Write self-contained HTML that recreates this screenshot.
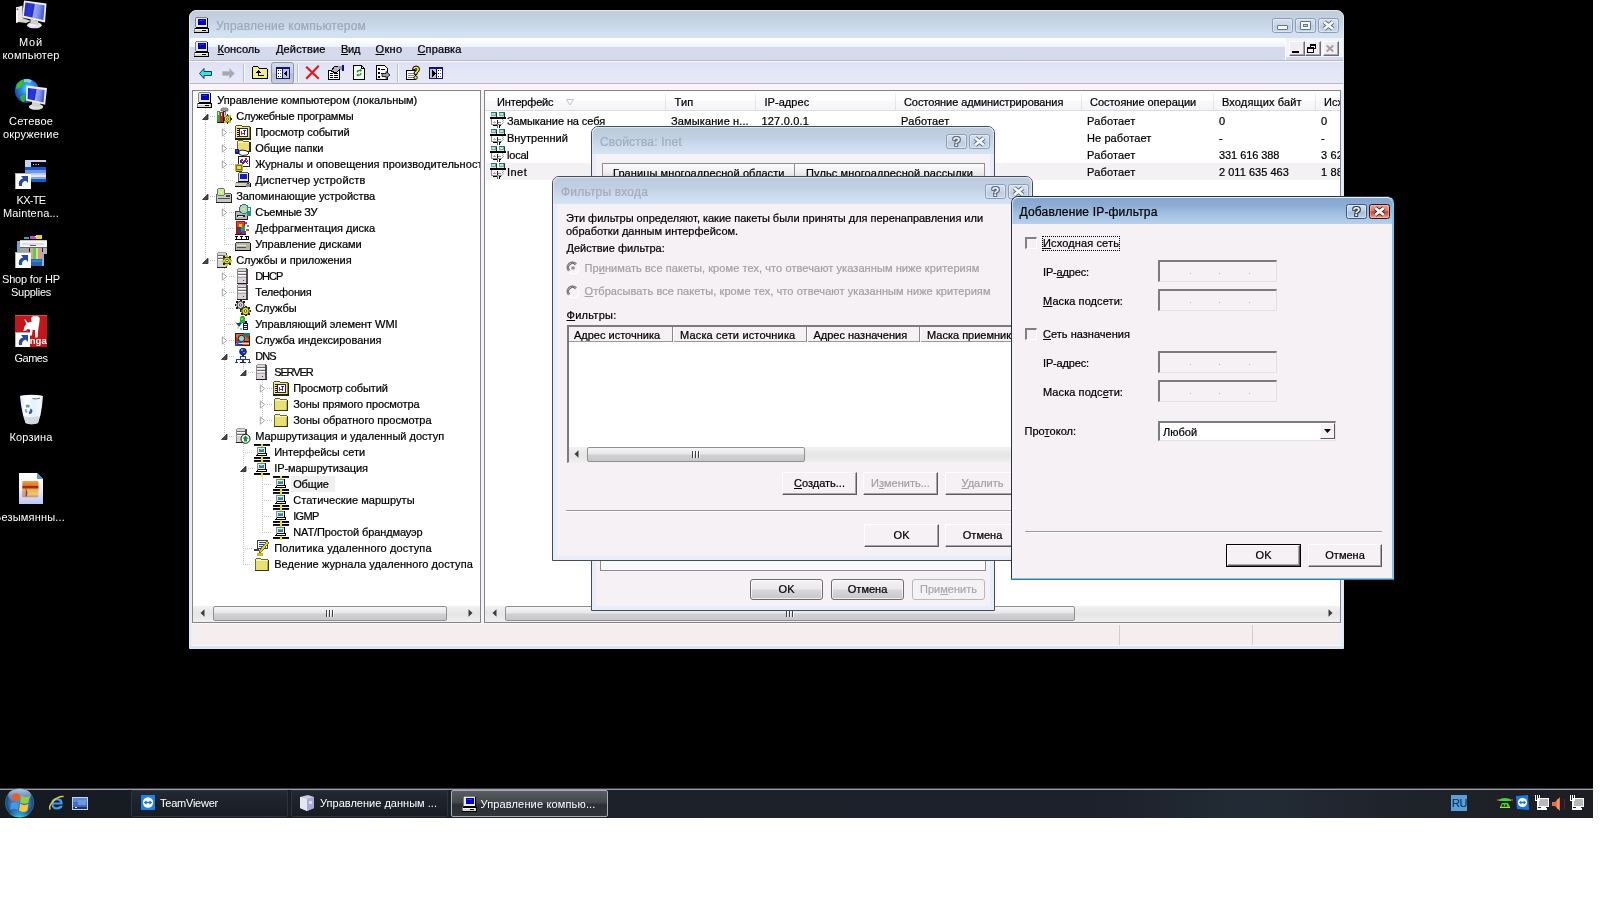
<!DOCTYPE html>
<html><head><meta charset="utf-8"><title>desktop</title><style>
*{margin:0;padding:0;box-sizing:border-box}
html,body{width:1600px;height:900px;overflow:hidden;background:#fff}
body{font-family:"Liberation Sans",sans-serif;font-size:11px;color:#000;position:relative}
div{position:absolute}
svg{position:absolute;overflow:visible}
.t{white-space:nowrap;line-height:14px;height:14px;-webkit-text-stroke:0.22px currentColor}
u{text-decoration:underline;text-underline-offset:1px}
</style></head><body><div id="root" style="left:0;top:0;width:1600px;height:900px;will-change:transform">
<div style="left:0px;top:0px;width:1593px;height:818px;background:#000"></div>
<svg style="left:14px;top:0px" width="34" height="30" viewBox="0 0 34 30"><defs><linearGradient id="scr" x1="0" y1="0" x2="1" y2="1"><stop offset="0" stop-color="#1020a0"/><stop offset="0.45" stop-color="#2838d0"/><stop offset="0.55" stop-color="#7080e8"/><stop offset="1" stop-color="#2030c0"/></linearGradient><radialGradient id="globe" cx="0.4" cy="0.35" r="0.7"><stop offset="0" stop-color="#80c0ff"/><stop offset="0.6" stop-color="#2868d0"/><stop offset="1" stop-color="#103080"/></radialGradient><linearGradient id="bin" x1="0" y1="0" x2="1" y2="0"><stop offset="0" stop-color="#dce8f0"/><stop offset="0.25" stop-color="#ffffff"/><stop offset="0.6" stop-color="#e4f2fc"/><stop offset="0.9" stop-color="#f4f8fc"/><stop offset="1" stop-color="#c8d4e0"/></linearGradient></defs><defs><linearGradient id="scr2" x1="0" y1="0" x2="1" y2="0.15"><stop offset="0" stop-color="#1c1cb0"/><stop offset="0.3" stop-color="#2c38dc"/><stop offset="0.5" stop-color="#2430c8"/><stop offset="0.56" stop-color="#98a8f0"/><stop offset="0.8" stop-color="#7888e8"/><stop offset="1" stop-color="#4858d8"/></linearGradient></defs><path d="M2 7.5 L8.5 5.5 L8.5 21 L2 22.8 Z" fill="#e4e4dc"/><path d="M2 7.5 L4 7 L4 22.2 L2 22.8 Z" fill="#f8f8f4"/><rect x="2.6" y="8.5" width="1.6" height="1.6" fill="#606060"/><path d="M8.5 18 L17 21 L12 23 L4 22 Z" fill="#d4d4cc"/><ellipse cx="20.4" cy="25.2" rx="7.3" ry="3.1" fill="#e4e4e4"/><ellipse cx="19" cy="24.6" rx="3.5" ry="1.5" fill="#f4f4fc"/><path d="M16.5 19 L24 21 L24.5 25 L16.5 24 Z" fill="#d0d0cc"/><path d="M10 0.5 L32.5 3.5 L31 22.5 L8 17.5 Z" fill="#ececfa"/><path d="M11.5 2.6 L30.6 5.2 L29.4 20 L9.9 15.8 Z" fill="url(#scr2)"/></svg>
<div class="t" style="left:19.0px;top:35px;color:#fff;-webkit-text-stroke:0;letter-spacing:0.817px;">Мой</div>
<div class="t" style="left:2.5px;top:48px;color:#fff;-webkit-text-stroke:0;letter-spacing:0.171px;">компьютер</div>
<svg style="left:14px;top:78px" width="34" height="34" viewBox="0 0 34 34"><defs><radialGradient id="globe2" cx="0.55" cy="0.4" r="0.65"><stop offset="0" stop-color="#58e0f0"/><stop offset="0.45" stop-color="#2888e0"/><stop offset="1" stop-color="#1838a0"/></radialGradient></defs><circle cx="12.8" cy="12.8" r="12" fill="url(#globe2)"/><path d="M2.5 7 Q5 2.5 9.5 1.5 Q10.5 5 8 8 Q5 11 2 11 Z" fill="#30c030"/><path d="M8 17 Q11 16 11.5 20 Q11 24 9 24.2 Q6 22 6 19 Z" fill="#30b030"/><path d="M10 1.2 Q14 0.5 18 2.5 L16 5 Q12 3.5 10 4.5 Z" fill="#a0e0f0" opacity="0.8"/><ellipse cx="22" cy="28.8" rx="7.2" ry="3" fill="#e0e0dc"/><path d="M18 23 L26 25 L26.5 29 L18 28 Z" fill="#d0d0cc"/><path d="M12.4 7.6 L33 10 L31.2 26.8 L12 22.4 Z" fill="#ececfa"/><path d="M14 10 L30.6 12 L29.6 24.5 L13.6 21 Z" fill="url(#scr2)"/></svg>
<div class="t" style="left:9.0px;top:114px;color:#fff;-webkit-text-stroke:0;letter-spacing:0.188px;">Сетевое</div>
<div class="t" style="left:3.0px;top:127px;color:#fff;-webkit-text-stroke:0;letter-spacing:0.182px;">окружение</div>
<svg style="left:14px;top:158px" width="32" height="32" viewBox="0 0 32 32" shape-rendering="crispEdges" ><rect x="11" y="2" width="21" height="22" fill="#1450b8"/><rect x="11" y="2" width="21" height="2" fill="#d4ccf0"/><rect x="11" y="4" width="6" height="5" fill="#c4d4f4"/><rect x="17" y="4" width="15" height="5" fill="#080810"/><rect x="19" y="6" width="1" height="1" fill="#d0d8e0"/><rect x="21" y="6" width="2" height="1" fill="#809080"/><rect x="24" y="6" width="1" height="1" fill="#d0d8e0"/><rect x="11" y="9" width="21" height="3" fill="#1858c8"/><rect x="11" y="12" width="21" height="3" fill="#6c98dc"/><rect x="11" y="15" width="21" height="2" fill="#b8c8f0"/><rect x="11" y="17" width="21" height="2" fill="#ece4fa"/><rect x="11" y="19" width="21" height="2" fill="#88a8e4"/><rect x="11" y="21" width="21" height="3" fill="#1060c4"/><g transform="translate(1,15)"><rect x="0" y="0" width="16" height="16" fill="#fff"/><rect x="0" y="0" width="16" height="1" fill="#b0b0b0"/><rect x="0" y="0" width="1" height="16" fill="#b0b0b0"/><path d="M4 13 Q2.5 7 8 5.5 L6 3 L13 3 L13 10 L10.8 7.8 Q6.5 8.5 7 13 Z" fill="#2848a8" shape-rendering="auto"/></g></svg>
<div class="t" style="left:16.5px;top:193px;color:#fff;-webkit-text-stroke:0;letter-spacing:-0.679px;">KX-TE</div>
<div class="t" style="left:3.0px;top:206px;color:#fff;-webkit-text-stroke:0;letter-spacing:0.144px;">Maintena...</div>
<svg style="left:14px;top:235px" width="32" height="32" viewBox="0 0 32 32" shape-rendering="crispEdges" ><rect x="10" y="2" width="5" height="2" fill="#38a0b0"/><rect x="16" y="1" width="6" height="3" fill="#c050d0"/><rect x="22" y="0" width="6" height="4" fill="#e8d828"/><rect x="21" y="1" width="2" height="1" fill="#e8e8e8"/><rect x="3" y="6" width="3" height="12" fill="#6ca4cc"/><rect x="6" y="5" width="27" height="1" fill="#c8c8c8"/><rect x="6" y="6" width="27" height="6" fill="#f6f6f6"/><rect x="8" y="8" width="22" height="2" fill="#dcdcdc"/><rect x="16" y="10" width="6" height="1" fill="#606060"/><rect x="6" y="12" width="27" height="1" fill="#686868"/><rect x="6" y="13" width="27" height="4" fill="#a0a4a4"/><rect x="6" y="17" width="11" height="2" fill="#7c8488"/><rect x="27" y="13" width="6" height="6" fill="#b4b0b4"/><rect x="16" y="13" width="3" height="11" fill="#d8a49c"/><rect x="19" y="13" width="3" height="12" fill="#58c860"/><rect x="22" y="13" width="2" height="12" fill="#d8e468"/><rect x="24" y="13" width="4" height="11" fill="#d49c98"/><rect x="15" y="13" width="1" height="5" fill="#202020"/><rect x="28" y="13" width="1" height="5" fill="#202020"/><rect x="17" y="24" width="11" height="7" fill="#2464b4"/><rect x="18" y="25" width="9" height="2" fill="#3c80cc"/><rect x="28" y="17" width="2" height="14" fill="#88b4d8"/><g transform="translate(1,17)"><rect x="0" y="0" width="16" height="16" fill="#fff"/><rect x="0" y="0" width="16" height="1" fill="#b0b0b0"/><rect x="0" y="0" width="1" height="16" fill="#b0b0b0"/><path d="M4 13 Q2.5 7 8 5.5 L6 3 L13 3 L13 10 L10.8 7.8 Q6.5 8.5 7 13 Z" fill="#2848a8" shape-rendering="auto"/></g></svg>
<div class="t" style="left:2.0px;top:272px;color:#fff;-webkit-text-stroke:0;letter-spacing:-0.175px;">Shop for HP</div>
<div class="t" style="left:11.0px;top:285px;color:#fff;-webkit-text-stroke:0;letter-spacing:-0.274px;">Supplies</div>
<svg style="left:15px;top:315px" width="32" height="32" viewBox="0 0 32 32" shape-rendering="crispEdges" ><rect x="0" y="0" width="32" height="32" fill="#c4141c"/><rect x="0" y="0" width="32" height="1" fill="#d85050"/><path d="M16 3 L18 1.2 L23 1.2 L24.8 3 L24.3 8 L23.3 14 L22.6 22.5 L20.3 22.5 L20 15 L17.6 15 L17 20.5 L15 20.5 L15 14.5 L12.5 14 L10.5 16 L8.3 16 L9.8 11 L11.3 8.8 L9.3 4.6 L10.4 4.4 L12.8 7.8 L16.6 6.8 Z" fill="#fff" shape-rendering="auto"/><text x="14.8" y="29" font-family="Liberation Sans" font-weight="bold" font-size="9.5" fill="#fff" shape-rendering="auto" text-rendering="geometricPrecision">nga</text><g transform="translate(0,17)"><rect x="0" y="0" width="15" height="15" fill="#fff"/><rect x="0" y="0" width="15" height="1" fill="#b0b0b0"/><rect x="0" y="0" width="1" height="15" fill="#b0b0b0"/><path d="M4 13 Q2.5 7 8 5.5 L6 3 L13 3 L13 10 L10.8 7.8 Q6.5 8.5 7 13 Z" fill="#2848a8" shape-rendering="auto"/></g></svg>
<div class="t" style="left:14.5px;top:351px;color:#fff;-webkit-text-stroke:0;letter-spacing:-0.491px;">Games</div>
<svg style="left:20px;top:394px" width="24" height="32" viewBox="0 0 24 32"><path d="M0 2.5 L23 2.5 L22 12 L20.5 21 L18 29 Q11.5 31.5 5.5 29 L3 21 L1.2 12 Z" fill="url(#bin)"/><ellipse cx="11.5" cy="2.6" rx="11.5" ry="1.8" fill="#f8fcff"/><path d="M12.5 4.6 Q16.5 5.4 20 4.2" stroke="#5c6c80" stroke-width="1" fill="none"/><path d="M4 22 Q11 24.5 19.5 22 L18 29 Q11.5 31.5 5.5 29 Z" fill="#d0d4d8" opacity="0.85"/><path d="M5.5 11.5 Q7.5 9.5 10 11.5 L9 14 Q7.5 12.5 6.5 14 Z" fill="#8094b8"/><path d="M4.8 15 Q4.5 18.5 6.5 19.5 L7.5 17.5 Q6.6 16.5 7 15.2 Z" fill="#90a8cc"/><path d="M9 20 Q12 20.5 12.5 17 Q12.5 15 10.5 14.5 L9.8 16.5 Q10.6 17.6 8.8 17.8 Z" fill="#2c5cc4"/></svg>
<div class="t" style="left:9.5px;top:430px;color:#fff;-webkit-text-stroke:0;letter-spacing:0.157px;">Корзина</div>
<svg style="left:19px;top:473px" width="24" height="32" viewBox="0 0 24 32"><defs><linearGradient id="pg" x1="0" y1="0" x2="0" y2="1"><stop offset="0" stop-color="#ffffff"/><stop offset="0.45" stop-color="#f4f4ff"/><stop offset="1" stop-color="#bcc8f4"/></linearGradient><linearGradient id="sun" x1="0" y1="0" x2="0" y2="1"><stop offset="0" stop-color="#f4a040"/><stop offset="0.28" stop-color="#e87028"/><stop offset="0.34" stop-color="#8c2810"/><stop offset="0.42" stop-color="#a03818"/><stop offset="0.5" stop-color="#f0a850"/><stop offset="0.8" stop-color="#f4c868"/><stop offset="1" stop-color="#c09078"/></linearGradient></defs><path d="M0 0 L18 0 L24 6 L24 31 L0 31 Z" fill="url(#pg)"/><path d="M18 0 L18 6 L24 6 Z" fill="#5c98dc"/><rect x="3.3" y="8" width="16.2" height="16.3" rx="1" fill="url(#sun)"/><path d="M6.5 14 L8.5 20 L7.5 23.5 L6 23.5 L7 19 Z" fill="#503050"/><rect x="3.3" y="18" width="4" height="6" fill="#c08890" opacity="0.6"/></svg>
<div class="t" style="left:-6px;top:510px;color:#fff;-webkit-text-stroke:0;letter-spacing:0.184px;">Безымянны...</div>
<div style="left:0px;top:788px;width:1593px;height:30px;background:linear-gradient(90deg,#151a21 0,#1b2129 500px,#1c222b 1100px,#222b35 1250px,#1e2128 1450px,#1c1e24 1593px)"></div>
<div style="left:0px;top:788px;width:1593px;height:1px;background:#3c4047"></div>
<div style="left:0px;top:789px;width:1593px;height:1px;background:#9a9ea4"></div>
<svg style="left:5px;top:788px" width="30" height="30" viewBox="0 0 30 30"><defs><radialGradient id="orb" cx="0.5" cy="0.5" r="0.5"><stop offset="0" stop-color="#3c84c8"/><stop offset="0.7" stop-color="#2c6cb4"/><stop offset="0.92" stop-color="#1c4880"/><stop offset="1" stop-color="#4c7498"/></radialGradient><linearGradient id="orbh" x1="0" y1="0" x2="0" y2="1"><stop offset="0" stop-color="#c8d4e4" stop-opacity="0.95"/><stop offset="1" stop-color="#88a8cc" stop-opacity="0.15"/></linearGradient><radialGradient id="orbg" cx="0.5" cy="1" r="0.6"><stop offset="0" stop-color="#30e0f8" stop-opacity="0.95"/><stop offset="1" stop-color="#30c0f0" stop-opacity="0"/></radialGradient></defs><circle cx="14.6" cy="14.8" r="14.5" fill="url(#orb)"/><ellipse cx="14.6" cy="7.5" rx="11.5" ry="6.8" fill="url(#orbh)"/><ellipse cx="14.6" cy="23" rx="12" ry="6.5" fill="url(#orbg)"/><path d="M7.2 7 Q11 3.8 15 6.8 L14 13.6 Q10.3 11.2 6.4 13.6 Z" fill="#ec5c28"/><path d="M16.2 7.6 Q20 10.5 24.6 7.8 L23.6 14.6 Q19.4 17.2 15.2 14.4 Z" fill="#94cc40"/><path d="M6 15 Q10 12.8 13.8 15.2 L12.8 22 Q9 19.4 5 22 Z" fill="#3c9cec"/><path d="M15 15.8 Q19 18.4 23.4 16 L22.4 22.8 Q18.2 25.4 14 22.6 Z" fill="#f8c830"/></svg>
<svg style="left:49px;top:795px" width="16" height="16" viewBox="0 0 16 16"><path d="M13.6 9.4 L4.5 9.4 Q4.8 12.2 8 12.2 Q10 12.2 10.8 10.8 L13.8 10.8 Q12.6 14.6 8 14.6 Q2.2 14.6 2.2 8.6 Q2.2 3 8 3 Q14 3 13.6 9.4 Z M4.6 7.4 L11 7.4 Q10.8 5.2 8 5.2 Q5.2 5.2 4.6 7.4 Z" fill="#3c9cf0" fill-rule="evenodd"/><path d="M1.2 14.6 Q-0.8 11.5 4.5 5.8 Q10 0.6 14.6 1.6" fill="none" stroke="#f0c830" stroke-width="1.5"/></svg>
<svg style="left:72px;top:797px" width="16" height="13" viewBox="0 0 16 13" shape-rendering="crispEdges" ><rect x="0" y="0" width="16" height="13" fill="#c4d4f0"/><rect x="1" y="1" width="14" height="11" fill="#3c6cc8"/><rect x="1" y="1" width="14" height="4" fill="#5c88d8"/><rect x="6" y="3" width="8" height="5" fill="#6c98e0"/><rect x="1" y="10" width="14" height="2" fill="#203858"/><rect x="3" y="10" width="2" height="1" fill="#e8f0ff"/></svg>
<div style="left:131px;top:790px;width:157px;height:27px;border:1px solid #30353d;border-radius:2px;background:linear-gradient(180deg,#232932 0,#1c222b 50%,#181d25 100%)"></div>
<div style="left:291px;top:790px;width:157px;height:27px;border:1px solid #30353d;border-radius:2px;background:linear-gradient(180deg,#232932 0,#1c222b 50%,#181d25 100%)"></div>
<div style="left:451px;top:790px;width:157px;height:27px;border:1px solid #a8acb0;border-radius:2px;background:linear-gradient(180deg,#595d63 0,#44484e 45%,#2c3036 55%,#30343a 100%)"></div>
<svg style="left:141px;top:795px" width="14" height="15" viewBox="0 0 14 15"><rect x="0" y="0" width="14" height="15" fill="#1c78e0"/><rect x="0" y="0" width="14" height="15" rx="2" fill="#2080e8"/><circle cx="7" cy="7.5" r="5.2" fill="#fff"/><path d="M2.8 7.5 L5.5 5.3 L5.5 6.7 L8.5 6.7 L8.5 5.3 L11.2 7.5 L8.5 9.7 L8.5 8.3 L5.5 8.3 L5.5 9.7 Z" fill="#1c70d8"/></svg>
<div class="t" style="left:160px;top:796px;color:#fff;-webkit-text-stroke:0;letter-spacing:-0.232px;">TeamViewer</div>
<svg style="left:299px;top:795px" width="16" height="16" viewBox="0 0 16 16"><path d="M1 2 L9 0 L15 2 L15 13 L8 16 L1 13 Z" fill="#c8cce0"/><path d="M1 2 L8 4 L8 16 L1 13 Z" fill="#e4e6f4"/><path d="M8 4 L15 2 L15 13 L8 16 Z" fill="#a8acd0"/><rect x="10" y="6" width="3" height="3" fill="#d8dcf0"/></svg>
<div class="t" style="left:320px;top:796px;color:#fff;-webkit-text-stroke:0;letter-spacing:0.020px;">Управление данным ...</div>
<svg style="left:462px;top:796px" width="16" height="16" viewBox="0 0 16 16" shape-rendering="crispEdges" ><rect x="2" y="0" width="11" height="1" fill="#808080"/><rect x="1" y="1" width="1" height="9" fill="#808080"/><rect x="2" y="1" width="11" height="9" fill="#e8e8e0"/><rect x="13" y="1" width="1" height="9" fill="#000"/><rect x="4" y="2" width="8" height="6" fill="#0000c8"/><rect x="5" y="3" width="5" height="1" fill="#3030e0"/><rect x="2" y="10" width="12" height="1" fill="#000"/><rect x="1" y="11" width="13" height="1" fill="#000"/><rect x="0" y="12" width="14" height="3" fill="#d8d8c8"/><rect x="14" y="11" width="1" height="4" fill="#000"/><rect x="0" y="15" width="15" height="1" fill="#000"/><rect x="0" y="11" width="1" height="4" fill="#808080"/><rect x="8" y="13" width="4" height="1" fill="#000"/><rect x="1" y="12" width="12" height="1" fill="#fff"/></svg>
<div class="t" style="left:480.5px;top:797px;color:#fff;-webkit-text-stroke:0;letter-spacing:0.154px;">Управление компью...</div>
<div style="left:1451px;top:795px;width:16px;height:16px;background:#5a9fd8"></div>
<div class="t" style="left:1452px;top:796px;color:#12386c;letter-spacing:-0.443px;">RU</div>
<svg style="left:1497px;top:797px" width="16" height="11" viewBox="0 0 16 11"><path d="M1 3 Q8 -1 15 3 L15 4 L1 4 Z" fill="#38d838"/><rect x="0" y="2" width="2" height="2" fill="#d02020"/><rect x="14" y="2" width="2" height="2" fill="#d02020"/><path d="M3 10 L5 6 L11 6 L13 10 Z" fill="#38d838"/><path d="M5 10 L6 7.5 L7 10 M8 10 L9 7.5 L10 10" stroke="#103010" stroke-width="1" fill="none"/><rect x="3" y="10" width="10" height="1" fill="#d0d020"/></svg>
<svg style="left:1516px;top:795px" width="14" height="15" viewBox="0 0 14 15"><path d="M0 1 L12 0 L13 15 L1 14 Z" fill="#1c78e0"/><circle cx="6.5" cy="7.5" r="4.6" fill="#fff"/><path d="M2.8 7.5 L5.3 5.5 L5.3 6.8 L7.7 6.8 L7.7 5.5 L10.2 7.5 L7.7 9.5 L7.7 8.2 L5.3 8.2 L5.3 9.5 Z" fill="#1c70d8"/></svg>
<svg style="left:1534px;top:795px" width="16" height="16" viewBox="0 0 16 16" shape-rendering="crispEdges" ><rect x="4" y="3" width="11" height="9" fill="#fff"/><rect x="5" y="4" width="9" height="7" fill="#b8b8b8"/><rect x="7" y="12" width="5" height="1" fill="#fff"/><rect x="3" y="13" width="10" height="2" fill="#fff"/><rect x="1" y="0" width="1" height="5" fill="#fff"/><rect x="3" y="0" width="1" height="5" fill="#fff"/><rect x="5" y="0" width="1" height="5" fill="#fff"/><rect x="1" y="5" width="5" height="1" fill="#fff"/><rect x="3" y="6" width="1" height="8" fill="#fff"/></svg>
<svg style="left:1552px;top:796px" width="9" height="16" viewBox="0 0 9 16"><path d="M0 6 L3 6 L8 1 L8 15 L3 10 L0 10 Z" fill="#e87048"/><path d="M6 3 L6 13" stroke="#f8c0a0" stroke-width="1"/></svg>
<div style="left:1564px;top:799px;width:1px;height:10px;background:#702020"></div>
<svg style="left:1569px;top:795px" width="16" height="16" viewBox="0 0 16 16" shape-rendering="crispEdges" ><rect x="4" y="3" width="11" height="9" fill="#fff"/><rect x="5" y="4" width="9" height="7" fill="#b8b8b8"/><rect x="7" y="12" width="5" height="1" fill="#fff"/><rect x="3" y="13" width="10" height="2" fill="#fff"/><rect x="1" y="0" width="1" height="5" fill="#fff"/><rect x="3" y="0" width="1" height="5" fill="#fff"/><rect x="5" y="0" width="1" height="5" fill="#fff"/><rect x="1" y="5" width="5" height="1" fill="#fff"/><rect x="3" y="6" width="1" height="8" fill="#fff"/></svg>
<div style="left:189px;top:10px;width:1155px;height:639px;background:#e9eef7;border-radius:7px 7px 0 0;border:1px solid #dfe7f1;"></div>
<div style="left:190px;top:11px;width:1153px;height:27px;border-radius:6px 6px 0 0;background:linear-gradient(180deg,#c0cddb 0,#c4d2e2 35%,#cddcee 70%,#d3e2f4 88%,#d6e1ec 92%,#d6e1ec 100%)"></div>
<svg style="left:194px;top:17px" width="16" height="16" viewBox="0 0 16 16" shape-rendering="crispEdges" ><rect x="2" y="0" width="11" height="1" fill="#808080"/><rect x="1" y="1" width="1" height="9" fill="#808080"/><rect x="2" y="1" width="11" height="9" fill="#e8e8e0"/><rect x="13" y="1" width="1" height="9" fill="#000"/><rect x="4" y="2" width="8" height="6" fill="#0000c8"/><rect x="5" y="3" width="5" height="1" fill="#3030e0"/><rect x="2" y="10" width="12" height="1" fill="#000"/><rect x="1" y="11" width="13" height="1" fill="#000"/><rect x="0" y="12" width="14" height="3" fill="#d8d8c8"/><rect x="14" y="11" width="1" height="4" fill="#000"/><rect x="0" y="15" width="15" height="1" fill="#000"/><rect x="0" y="11" width="1" height="4" fill="#808080"/><rect x="8" y="13" width="4" height="1" fill="#000"/><rect x="1" y="12" width="12" height="1" fill="#fff"/></svg>
<div class="t" style="left:216px;top:18px;color:#9fa9b4;font-size:12px;letter-spacing:0.206px;line-height:16px;height:16px;">Управление компьютером</div>
<div style="left:1272px;top:18px;width:21px;height:15px;border:1px solid #8d9db3;border-radius:2.5px;background:linear-gradient(180deg,#d5e0ee 0,#c9d6e8 45%,#bfcde1 55%,#c9d7ea 100%);box-shadow:inset 0 0 0 1px rgba(235,242,250,.55)"></div><div style="left:1277px;top:25px;width:11px;height:5px;border:1px solid #66738a;background:#f4f7fb;border-radius:1px"></div>
<div style="left:1295px;top:18px;width:21px;height:15px;border:1px solid #8d9db3;border-radius:2.5px;background:linear-gradient(180deg,#d5e0ee 0,#c9d6e8 45%,#bfcde1 55%,#c9d7ea 100%);box-shadow:inset 0 0 0 1px rgba(235,242,250,.55)"></div><div style="left:1300px;top:21px;width:11px;height:9px;border:1px solid #66738a;background:#f4f7fb;border-radius:1px"></div><div style="left:1303px;top:24px;width:5px;height:3px;border:1px solid #66738a;background:#c9d6e8"></div>
<div style="left:1318px;top:18px;width:21px;height:15px;border:1px solid #8d9db3;border-radius:2.5px;background:linear-gradient(180deg,#d5e0ee 0,#c9d6e8 45%,#bfcde1 55%,#c9d7ea 100%);box-shadow:inset 0 0 0 1px rgba(235,242,250,.55)"></div><svg style="left:1322px;top:21px" width="13" height="9" viewBox="0 0 13 9"><path d="M2.2 1 L10.8 8 M10.8 1 L2.2 8" stroke="#5f6c82" stroke-width="4.6" stroke-linecap="butt"/><path d="M2.2 1 L10.8 8 M10.8 1 L2.2 8" stroke="#f6f8fb" stroke-width="2.7"/></svg>
<div style="left:190px;top:38px;width:1153px;height:22px;background:linear-gradient(180deg,#fbfeff 0,#f8fbff 20%,#eef0fc 40.5%,#d7daed 41%,#d3d9ea 100%)"></div>
<div style="left:190px;top:60px;width:1153px;height:1px;background:#b6bace"></div>
<svg style="left:194px;top:41px" width="16" height="16" viewBox="0 0 16 16" shape-rendering="crispEdges" ><rect x="2" y="0" width="11" height="1" fill="#808080"/><rect x="1" y="1" width="1" height="9" fill="#808080"/><rect x="2" y="1" width="11" height="9" fill="#e8e8e0"/><rect x="13" y="1" width="1" height="9" fill="#000"/><rect x="4" y="2" width="8" height="6" fill="#0000c8"/><rect x="5" y="3" width="5" height="1" fill="#3030e0"/><rect x="2" y="10" width="12" height="1" fill="#000"/><rect x="1" y="11" width="13" height="1" fill="#000"/><rect x="0" y="12" width="14" height="3" fill="#d8d8c8"/><rect x="14" y="11" width="1" height="4" fill="#000"/><rect x="0" y="15" width="15" height="1" fill="#000"/><rect x="0" y="11" width="1" height="4" fill="#808080"/><rect x="8" y="13" width="4" height="1" fill="#000"/><rect x="1" y="12" width="12" height="1" fill="#fff"/></svg>
<div class="t" style="left:217.5px;top:42px;letter-spacing:0.036px;"><u>К</u>онсоль</div>
<div class="t" style="left:276px;top:42px;letter-spacing:0.143px;"><u>Д</u>ействие</div>
<div class="t" style="left:341px;top:42px;letter-spacing:-0.300px;"><u>В</u>ид</div>
<div class="t" style="left:375.5px;top:42px;letter-spacing:0.360px;"><u>О</u>кно</div>
<div class="t" style="left:417.5px;top:42px;letter-spacing:0.121px;"><u>С</u>правка</div>
<div style="left:1286px;top:38px;width:57px;height:19px;background:#f2f2f9"></div>
<div style="left:1285px;top:38px;width:1px;height:22px;background:#fbfbfe"></div>
<div style="left:1289px;top:41px;width:16px;height:15px;background:#f1eef3;border-top:1px solid #fff;border-left:1px solid #fff;border-right:1px solid #6c6c70;border-bottom:1px solid #6c6c70"></div><div style="left:1290px;top:42px;width:14px;height:13px;border-right:1px solid #aaa6ac;border-bottom:1px solid #aaa6ac"></div><div style="left:1292px;top:51px;width:7px;height:2px;background:#000"></div>
<div style="left:1305px;top:41px;width:16px;height:15px;background:#f1eef3;border-top:1px solid #fff;border-left:1px solid #fff;border-right:1px solid #6c6c70;border-bottom:1px solid #6c6c70"></div><div style="left:1306px;top:42px;width:14px;height:13px;border-right:1px solid #aaa6ac;border-bottom:1px solid #aaa6ac"></div><div style="left:1310px;top:44px;width:6px;height:5px;border:1px solid #000;border-top:2px solid #000"></div><div style="left:1307px;top:47px;width:7px;height:6px;border:1px solid #000;border-top:2px solid #000;background:#f1eef3"></div>
<div style="left:1323px;top:41px;width:16px;height:15px;background:#f1eef3;border-top:1px solid #fff;border-left:1px solid #fff;border-right:1px solid #6c6c70;border-bottom:1px solid #6c6c70"></div><div style="left:1324px;top:42px;width:14px;height:13px;border-right:1px solid #aaa6ac;border-bottom:1px solid #aaa6ac"></div><svg style="left:1326px;top:44.5px" width="8" height="7" viewBox="0 0 8 7"><path d="M0.7 0.5 L7.3 6.5 M7.3 0.5 L0.7 6.5" stroke="#a2a0a4" stroke-width="1.9"/></svg>
<div style="left:190px;top:61px;width:1153px;height:22px;background:linear-gradient(180deg,#f8f8fd 0,#f8f8fd 4.5%,#e0dff3 5%,#e3e6f6 45%,#e8e8f5 100%)"></div>
<div style="left:190px;top:83px;width:1153px;height:1px;background:#b8b8c6"></div>
<div style="left:190px;top:84px;width:1153px;height:7px;background:#f8f4f8"></div>
<svg style="left:199px;top:68px" width="13" height="11" viewBox="0 0 13 11" shape-rendering="crispEdges" ><path d="M5 0.5 L5 3.5 L12.5 3.5 L12.5 7.5 L5 7.5 L5 10.5 L0.5 5.5 Z" fill="#40e0d8" stroke="#0c3870" stroke-width="1" shape-rendering="auto"/></svg>
<svg style="left:222px;top:68px" width="13" height="11" viewBox="0 0 13 11" shape-rendering="crispEdges" ><path d="M7.5 0.5 L7.5 3.5 L0.5 3.5 L0.5 7.5 L7.5 7.5 L7.5 10.5 L12.5 5.5 Z" fill="#a8a8b0" stroke="#b8b8c4" stroke-width="0.6" shape-rendering="auto"/></svg>
<div style="left:243px;top:64px;width:1px;height:18px;background:#b8bccc"></div><div style="left:244px;top:64px;width:1px;height:18px;background:#fafaff"></div>
<div style="left:297px;top:64px;width:1px;height:18px;background:#b8bccc"></div><div style="left:298px;top:64px;width:1px;height:18px;background:#fafaff"></div>
<div style="left:397px;top:64px;width:1px;height:18px;background:#b8bccc"></div><div style="left:398px;top:64px;width:1px;height:18px;background:#fafaff"></div>
<svg style="left:252px;top:66px" width="16" height="13" viewBox="0 0 16 13" shape-rendering="crispEdges" ><rect x="1" y="0" width="5" height="1" fill="#000"/><rect x="0" y="1" width="1" height="12" fill="#000"/><rect x="1" y="1" width="5" height="1" fill="#f0f080"/><rect x="6" y="1" width="1" height="1" fill="#000"/><rect x="7" y="2" width="8" height="1" fill="#000"/><rect x="1" y="2" width="6" height="1" fill="#f0f080"/><rect x="1" y="3" width="14" height="9" fill="#f0f080"/><rect x="15" y="3" width="1" height="10" fill="#000"/><rect x="0" y="12" width="16" height="1" fill="#000"/><rect x="6" y="4" width="1" height="1" fill="#000"/><rect x="5" y="5" width="3" height="1" fill="#000"/><rect x="4" y="6" width="5" height="1" fill="#000"/><rect x="6" y="7" width="1" height="3" fill="#000"/><rect x="6" y="9" width="6" height="1" fill="#000"/></svg>
<div style="left:271px;top:62px;width:23px;height:22px;border:1px solid #8c98ac;border-radius:3px;background:linear-gradient(180deg,#d4dae8 0,#c4ccdc 50%,#b4bccd 55%,#c8cfde 100%)"></div>
<svg style="left:276px;top:67px" width="14" height="12" viewBox="0 0 14 12" shape-rendering="crispEdges" ><rect x="0" y="0" width="14" height="12" fill="#101080"/><rect x="1" y="2" width="5" height="9" fill="#fff"/><rect x="7" y="2" width="6" height="9" fill="#c0c0d8"/><rect x="2" y="3" width="1" height="1" fill="#000"/><rect x="2" y="6" width="1" height="1" fill="#000"/><rect x="2" y="9" width="1" height="1" fill="#000"/><rect x="4" y="3" width="1" height="1" fill="#606060"/><rect x="4" y="6" width="1" height="1" fill="#606060"/><rect x="4" y="9" width="1" height="1" fill="#606060"/><path d="M11 3 L11 10 L7.5 6.5 Z" fill="#000"/></svg>
<svg style="left:306px;top:66px" width="14" height="13" viewBox="0 0 14 13"><path d="M1 1.5 L12 12 M12 0.5 L1 12" stroke="#e01820" stroke-width="2.2" stroke-linecap="square"/></svg>
<svg style="left:328px;top:65px" width="16" height="15" viewBox="0 0 16 15" shape-rendering="crispEdges" ><rect x="0" y="5" width="12" height="10" fill="#000"/><rect x="1" y="6" width="10" height="8" fill="#fff"/><rect x="2" y="8" width="3" height="1" fill="#000"/><rect x="6" y="8" width="4" height="1" fill="#000"/><rect x="2" y="10" width="3" height="1" fill="#000"/><rect x="6" y="10" width="4" height="1" fill="#000"/><rect x="2" y="12" width="3" height="1" fill="#000"/><rect x="6" y="12" width="4" height="1" fill="#000"/><path d="M3 6 L7 1 L11 1 L13 3 L8 8 Z" fill="#b8b8c8" stroke="#000" stroke-width="1"/><path d="M10 1 L14 1 L14 5 L12 5 Z" fill="#9898b0"/><rect x="14" y="0" width="2" height="6" fill="#101080"/></svg>
<svg style="left:353px;top:65px" width="12" height="15" viewBox="0 0 12 15" shape-rendering="crispEdges" ><path d="M0.5 0.5 L8.5 0.5 L11.5 3.5 L11.5 14.5 L0.5 14.5 Z" fill="#f4fff4" stroke="#000" stroke-width="1"/><path d="M8.5 0.5 L8.5 3.5 L11.5 3.5" fill="none" stroke="#000" stroke-width="1"/><path d="M3.5 7 Q4 4.5 7 4.8 L7 3.5 L9 5.5 L7 7 L7 6 Q5 6 4.8 7.5 Z M8.8 8.5 Q8.2 11 5.3 10.7 L5.3 12 L3.3 10 L5.3 8.5 L5.3 9.5 Q7.2 9.6 7.5 8 Z" fill="#209020" shape-rendering="auto"/></svg>
<svg style="left:376px;top:65px" width="14" height="15" viewBox="0 0 14 15" shape-rendering="crispEdges" ><path d="M0.5 0.5 L8.5 0.5 L11.5 3.5 L11.5 14.5 L0.5 14.5 Z" fill="#fff" stroke="#000" stroke-width="1"/><rect x="2" y="3" width="2" height="2" fill="#000"/><rect x="5" y="4" width="4" height="1" fill="#000"/><rect x="2" y="7" width="2" height="2" fill="#000"/><rect x="5" y="8" width="3" height="1" fill="#000"/><rect x="2" y="11" width="2" height="2" fill="#000"/><path d="M6 8.5 L10 8.5 L10 6.5 L14 10 L10 13.5 L10 11.5 L6 11.5 Z" fill="#a0a0a8" stroke="#000" stroke-width="0.8" shape-rendering="auto"/></svg>
<svg style="left:406px;top:65px" width="15" height="15" viewBox="0 0 15 15" shape-rendering="crispEdges" ><rect x="0" y="5" width="10" height="10" fill="#000"/><rect x="1" y="6" width="8" height="8" fill="#fff"/><rect x="2" y="8" width="6" height="1" fill="#808080"/><rect x="2" y="10" width="6" height="1" fill="#808080"/><rect x="2" y="12" width="6" height="1" fill="#808080"/><path d="M6.5 4.5 Q6.5 1 10 1 Q13.5 1 13.5 4.3 Q13.5 6.5 11 7.8 L11 9.5 L8.3 9.5 L8.3 6.8 Q10.8 5.8 10.8 4.5 Q10.8 3.5 10 3.5 Q9 3.5 9 4.8 Z" fill="#f0f020" stroke="#000" stroke-width="1" shape-rendering="auto"/><circle cx="9.6" cy="12.6" r="1.7" fill="#f0f020" stroke="#000" stroke-width="0.9" shape-rendering="auto"/></svg>
<svg style="left:429px;top:67px" width="14" height="12" viewBox="0 0 14 12" shape-rendering="crispEdges" ><rect x="0" y="0" width="14" height="12" fill="#101080"/><rect x="1" y="2" width="6" height="9" fill="#c0c0d8"/><rect x="8" y="2" width="5" height="9" fill="#fff"/><rect x="9" y="3" width="1" height="1" fill="#000"/><rect x="9" y="6" width="1" height="1" fill="#000"/><rect x="9" y="9" width="1" height="1" fill="#000"/><rect x="11" y="3" width="1" height="1" fill="#606060"/><rect x="11" y="6" width="1" height="1" fill="#606060"/><rect x="11" y="9" width="1" height="1" fill="#606060"/><path d="M3 3 L3 10 L6.5 6.5 Z" fill="#000"/></svg>
<div style="left:190px;top:91px;width:1153px;height:533px;background:#f6f2f6"></div>
<div style="left:192px;top:90px;width:289px;height:533px;background:#fff;border:1px solid #84848a"></div>
<div style="left:484px;top:90px;width:857px;height:533px;background:#fff;border:1px solid #84848a"></div>
<div style="left:192px;top:624px;width:1147px;height:21px;background:#f5eeee"></div>
<div style="left:192px;top:623px;width:1149px;height:1px;background:#fbf8f9"></div>
<div style="left:1119px;top:625px;width:1px;height:20px;background:#d4cdd0"></div>
<div style="left:1252px;top:625px;width:1px;height:20px;background:#d4cdd0"></div>
<div style="left:190px;top:645px;width:1153px;height:1px;background:#f4f8fc"></div>
<div style="left:190px;top:646px;width:1153px;height:2px;background:#d9e5f3"></div>
<div style="left:1341px;top:91px;width:2px;height:555px;background:#e3ecf7"></div>
<div style="left:190px;top:91px;width:2px;height:555px;background:#e3ecf7"></div>
<div style="left:193px;top:91px;width:287px;height:515px;overflow:hidden"><div style="left:-193px;top:-91px;width:1600px;height:900px"><div style="left:205px;top:108px;width:1px;height:152px;background:repeating-linear-gradient(180deg,#c4c4c4 0,#c4c4c4 1px,transparent 1px,transparent 2px)"></div><div style="left:224px;top:124px;width:1px;height:56px;background:repeating-linear-gradient(180deg,#c4c4c4 0,#c4c4c4 1px,transparent 1px,transparent 2px)"></div><div style="left:224px;top:204px;width:1px;height:40px;background:repeating-linear-gradient(180deg,#c4c4c4 0,#c4c4c4 1px,transparent 1px,transparent 2px)"></div><div style="left:224px;top:268px;width:1px;height:168px;background:repeating-linear-gradient(180deg,#c4c4c4 0,#c4c4c4 1px,transparent 1px,transparent 2px)"></div><div style="left:243px;top:364px;width:1px;height:8px;background:repeating-linear-gradient(180deg,#c4c4c4 0,#c4c4c4 1px,transparent 1px,transparent 2px)"></div><div style="left:262px;top:380px;width:1px;height:40px;background:repeating-linear-gradient(180deg,#c4c4c4 0,#c4c4c4 1px,transparent 1px,transparent 2px)"></div><div style="left:243px;top:444px;width:1px;height:120px;background:repeating-linear-gradient(180deg,#c4c4c4 0,#c4c4c4 1px,transparent 1px,transparent 2px)"></div><div style="left:262px;top:476px;width:1px;height:56px;background:repeating-linear-gradient(180deg,#c4c4c4 0,#c4c4c4 1px,transparent 1px,transparent 2px)"></div><svg style="left:197px;top:92px" width="16" height="16" viewBox="0 0 16 16" shape-rendering="crispEdges" ><rect x="2" y="0" width="11" height="1" fill="#808080"/><rect x="1" y="1" width="1" height="9" fill="#808080"/><rect x="2" y="1" width="11" height="9" fill="#e8e8e0"/><rect x="13" y="1" width="1" height="9" fill="#000"/><rect x="4" y="2" width="8" height="6" fill="#0000c8"/><rect x="5" y="3" width="5" height="1" fill="#3030e0"/><rect x="2" y="10" width="12" height="1" fill="#000"/><rect x="1" y="11" width="13" height="1" fill="#000"/><rect x="0" y="12" width="14" height="3" fill="#d8d8c8"/><rect x="14" y="11" width="1" height="4" fill="#000"/><rect x="0" y="15" width="15" height="1" fill="#000"/><rect x="0" y="11" width="1" height="4" fill="#808080"/><rect x="8" y="13" width="4" height="1" fill="#000"/><rect x="1" y="12" width="12" height="1" fill="#fff"/></svg><div class="t" style="left:217.2px;top:93px;letter-spacing:-0.037px;">Управление компьютером (локальным)</div><div style="left:210px;top:116px;width:5px;height:1px;background:repeating-linear-gradient(90deg,#c4c4c4 0,#c4c4c4 1px,transparent 1px,transparent 2px)"></div><svg style="left:216px;top:108px" width="16" height="16" viewBox="0 0 16 16" shape-rendering="crispEdges" ><rect x="1" y="3" width="3" height="11" fill="#28a830"/><rect x="2" y="4" width="1" height="3" fill="#d0f0d0"/><rect x="4" y="4" width="3" height="10" fill="#c02020"/><rect x="5" y="5" width="1" height="3" fill="#f8d0d0"/><rect x="7" y="3" width="3" height="11" fill="#18188c"/><rect x="8" y="4" width="1" height="3" fill="#c8c8f0"/><rect x="1" y="14" width="9" height="1" fill="#101010"/><path d="M5 1 L6 0 L11 0 L12 1 L12 3 L10 3 L10 2 L7 2 L7 3 L5 3 Z" fill="#b0b0b0" stroke="#404040" stroke-width="0.6" shape-rendering="auto"/><rect x="9" y="2" width="1" height="6" fill="#707070"/><circle cx="11.5" cy="11" r="3.3" fill="#e0e028" stroke="#282800" stroke-width="1" shape-rendering="auto"/><circle cx="11.5" cy="11" r="1.1" fill="#fff" stroke="#282800" stroke-width="0.6" shape-rendering="auto"/><rect x="11" y="6" width="1" height="2" fill="#282800"/><rect x="11" y="14" width="1" height="2" fill="#282800"/><rect x="7" y="10" width="1" height="2" fill="#282800"/><rect x="15" y="10" width="1" height="2" fill="#282800"/><rect x="8" y="7" width="2" height="2" fill="#c8c820"/><rect x="13" y="7" width="2" height="2" fill="#c8c820"/><rect x="8" y="13" width="2" height="2" fill="#c8c820"/><rect x="13" y="13" width="2" height="2" fill="#c8c820"/></svg><svg style="left:202px;top:113px" width="7" height="7" viewBox="0 0 7 7"><path d="M6 1 L6 6.5 L0.5 6.5 Z" fill="#484848" stroke="#282828" stroke-width="0.8"/></svg><div class="t" style="left:236.2px;top:109px;letter-spacing:-0.161px;">Служебные программы</div><div style="left:229px;top:132px;width:5px;height:1px;background:repeating-linear-gradient(90deg,#c4c4c4 0,#c4c4c4 1px,transparent 1px,transparent 2px)"></div><svg style="left:235px;top:124px" width="16" height="16" viewBox="0 0 16 16" shape-rendering="crispEdges" ><rect x="1" y="1" width="6" height="1" fill="#585020"/><rect x="0" y="2" width="1" height="13" fill="#585020"/><rect x="1" y="2" width="6" height="1" fill="#f4eca0"/><rect x="7" y="2" width="8" height="1" fill="#585020"/><rect x="1" y="3" width="14" height="11" fill="#ece490"/><rect x="15" y="3" width="1" height="12" fill="#282410"/><rect x="0" y="14" width="16" height="2" fill="#282410"/><rect x="14" y="3" width="1" height="11" fill="#8c8440"/><rect x="4" y="4" width="9" height="9" fill="#fff"/><rect x="4" y="4" width="9" height="1" fill="#282828"/><rect x="12" y="4" width="1" height="9" fill="#282828"/><rect x="4" y="12" width="9" height="1" fill="#282828"/><rect x="4" y="4" width="1" height="9" fill="#282828"/><rect x="2" y="4" width="2" height="1" fill="#101010"/><rect x="2" y="6" width="2" height="1" fill="#101010"/><rect x="2" y="8" width="2" height="1" fill="#101010"/><rect x="2" y="10" width="2" height="1" fill="#101010"/><rect x="2" y="12" width="2" height="1" fill="#101010"/><rect x="6" y="7" width="1" height="4" fill="#c82020"/><rect x="7" y="9" width="2" height="1" fill="#c82020"/><rect x="9" y="6" width="1" height="5" fill="#2020c8"/><rect x="10" y="6" width="1" height="1" fill="#2020c8"/><rect x="8" y="6" width="1" height="1" fill="#c82020"/></svg><svg style="left:221px;top:128px" width="7" height="10" viewBox="0 0 7 10"><path d="M1.3 0.8 L5.6 4.5 L1.3 8.2 Z" fill="#fff" stroke="#a4a4a4" stroke-width="1"/></svg><div class="t" style="left:255.2px;top:125px;letter-spacing:-0.142px;">Просмотр событий</div><div style="left:229px;top:148px;width:5px;height:1px;background:repeating-linear-gradient(90deg,#c4c4c4 0,#c4c4c4 1px,transparent 1px,transparent 2px)"></div><svg style="left:235px;top:140px" width="16" height="16" viewBox="0 0 16 16" shape-rendering="crispEdges" ><rect x="3" y="0" width="5" height="1" fill="#706828"/><rect x="2" y="1" width="1" height="10" fill="#706828"/><rect x="3" y="1" width="5" height="1" fill="#f4eca0"/><rect x="8" y="1" width="6" height="1" fill="#706828"/><rect x="3" y="2" width="11" height="9" fill="#e8e070"/><rect x="3" y="2" width="11" height="1" fill="#f8f4b0"/><rect x="14" y="2" width="2" height="10" fill="#282410"/><rect x="3" y="11" width="12" height="1" fill="#282410"/><rect x="0" y="9" width="4" height="5" fill="#101c98"/><rect x="1" y="10" width="2" height="2" fill="#3040c8"/><path d="M4 11 L7 10 L12 11 L14 13 L12 15 L7 15.5 L4 14 Z" fill="#fff" stroke="#101010" stroke-width="0.9" shape-rendering="auto"/></svg><svg style="left:221px;top:144px" width="7" height="10" viewBox="0 0 7 10"><path d="M1.3 0.8 L5.6 4.5 L1.3 8.2 Z" fill="#fff" stroke="#a4a4a4" stroke-width="1"/></svg><div class="t" style="left:255.2px;top:141px;letter-spacing:-0.001px;">Общие папки</div><div style="left:229px;top:164px;width:5px;height:1px;background:repeating-linear-gradient(90deg,#c4c4c4 0,#c4c4c4 1px,transparent 1px,transparent 2px)"></div><svg style="left:235px;top:156px" width="16" height="16" viewBox="0 0 16 16" shape-rendering="crispEdges" ><rect x="3" y="0" width="12" height="11" fill="#fff"/><rect x="3" y="0" width="12" height="1" fill="#202020"/><rect x="3" y="0" width="1" height="11" fill="#202020"/><rect x="14" y="0" width="1" height="11" fill="#202020"/><rect x="3" y="10" width="12" height="1" fill="#202020"/><path d="M5 7 L7 3 L9 7 L11 2 L13 6" stroke="#c02020" fill="none" stroke-width="1"/><path d="M5 4 L8 8 L10 4 L13 8" stroke="#2030c0" fill="none" stroke-width="1"/><rect x="0" y="8" width="8" height="7" fill="#c8b820"/><rect x="1" y="9" width="6" height="5" fill="#807010"/><rect x="2" y="10" width="4" height="3" fill="#e8d860"/><rect x="1" y="15" width="6" height="1" fill="#403800"/></svg><svg style="left:221px;top:160px" width="7" height="10" viewBox="0 0 7 10"><path d="M1.3 0.8 L5.6 4.5 L1.3 8.2 Z" fill="#fff" stroke="#a4a4a4" stroke-width="1"/></svg><div class="t" style="left:255.2px;top:157px;letter-spacing:0.043px;">Журналы и оповещения производительности</div><div style="left:224px;top:180px;width:10px;height:1px;background:repeating-linear-gradient(90deg,#c4c4c4 0,#c4c4c4 1px,transparent 1px,transparent 2px)"></div><svg style="left:235px;top:172px" width="16" height="16" viewBox="0 0 16 16" shape-rendering="crispEdges" ><rect x="4" y="0" width="9" height="1" fill="#606060"/><rect x="3" y="1" width="1" height="8" fill="#606060"/><rect x="4" y="1" width="9" height="8" fill="#e0e0d8"/><rect x="13" y="1" width="1" height="8" fill="#000"/><rect x="5" y="2" width="7" height="5" fill="#1020c0"/><rect x="3" y="9" width="11" height="1" fill="#000"/><rect x="1" y="10" width="14" height="1" fill="#606060"/><rect x="0" y="11" width="15" height="3" fill="#d0d0c0"/><rect x="0" y="14" width="16" height="1" fill="#000"/><rect x="15" y="11" width="1" height="3" fill="#000"/><rect x="11" y="12" width="4" height="3" fill="#909090"/><rect x="12" y="11" width="2" height="1" fill="#404040"/></svg><div class="t" style="left:255.2px;top:173px;letter-spacing:0.145px;">Диспетчер устройств</div><div style="left:210px;top:196px;width:5px;height:1px;background:repeating-linear-gradient(90deg,#c4c4c4 0,#c4c4c4 1px,transparent 1px,transparent 2px)"></div><svg style="left:216px;top:188px" width="16" height="16" viewBox="0 0 16 16" shape-rendering="crispEdges" ><rect x="1" y="5" width="14" height="9" fill="#c8c8c8"/><rect x="1" y="5" width="14" height="1" fill="#606060"/><rect x="0" y="6" width="1" height="9" fill="#606060"/><rect x="15" y="6" width="1" height="9" fill="#202020"/><rect x="0" y="14" width="16" height="1" fill="#202020"/><rect x="2" y="10" width="12" height="1" fill="#505050"/><rect x="10" y="7" width="4" height="2" fill="#404040"/><circle cx="5" cy="4" r="4" fill="#c8e8a0" stroke="#608060" stroke-width="1"/><circle cx="5" cy="4" r="1.2" fill="#f8f060"/></svg><svg style="left:202px;top:193px" width="7" height="7" viewBox="0 0 7 7"><path d="M6 1 L6 6.5 L0.5 6.5 Z" fill="#484848" stroke="#282828" stroke-width="0.8"/></svg><div class="t" style="left:236.2px;top:189px;letter-spacing:-0.045px;">Запоминающие устройства</div><div style="left:229px;top:212px;width:5px;height:1px;background:repeating-linear-gradient(90deg,#c4c4c4 0,#c4c4c4 1px,transparent 1px,transparent 2px)"></div><svg style="left:235px;top:204px" width="16" height="16" viewBox="0 0 16 16" shape-rendering="crispEdges" ><rect x="0" y="7" width="13" height="8" fill="#b8b8b8"/><rect x="0" y="7" width="13" height="1" fill="#404040"/><rect x="0" y="7" width="1" height="8" fill="#404040"/><rect x="12" y="7" width="1" height="8" fill="#202020"/><rect x="0" y="15" width="13" height="1" fill="#202020"/><rect x="2" y="11" width="8" height="2" fill="#202020"/><rect x="3" y="12" width="5" height="1" fill="#e0e0e0"/><circle cx="9" cy="5" r="4.5" fill="#a8d8c0" stroke="#407060" stroke-width="1"/><circle cx="9" cy="5" r="1.3" fill="#f0e850"/><rect x="12" y="3" width="4" height="9" fill="#209080"/><rect x="13" y="4" width="2" height="3" fill="#e0f0e8"/></svg><svg style="left:221px;top:208px" width="7" height="10" viewBox="0 0 7 10"><path d="M1.3 0.8 L5.6 4.5 L1.3 8.2 Z" fill="#fff" stroke="#a4a4a4" stroke-width="1"/></svg><div class="t" style="left:255.2px;top:205px;letter-spacing:-0.316px;">Съемные ЗУ</div><div style="left:224px;top:228px;width:10px;height:1px;background:repeating-linear-gradient(90deg,#c4c4c4 0,#c4c4c4 1px,transparent 1px,transparent 2px)"></div><svg style="left:235px;top:220px" width="16" height="16" viewBox="0 0 16 16" shape-rendering="crispEdges" ><rect x="1" y="1" width="9" height="13" fill="#a01818"/><rect x="2" y="2" width="7" height="5" fill="#e04040"/><rect x="3" y="8" width="3" height="5" fill="#2040d0"/><rect x="6" y="6" width="4" height="6" fill="#30a030"/><rect x="4" y="4" width="3" height="3" fill="#d0d020"/><rect x="10" y="2" width="2" height="2" fill="#c020c0"/><rect x="12" y="5" width="2" height="2" fill="#20a0c0"/><rect x="11" y="9" width="3" height="2" fill="#d06020"/><rect x="0" y="14" width="11" height="1" fill="#400808"/><rect x="7" y="11" width="4" height="3" fill="#8030a0"/></svg><div class="t" style="left:255.2px;top:221px;letter-spacing:-0.017px;">Дефрагментация диска</div><div style="left:224px;top:244px;width:10px;height:1px;background:repeating-linear-gradient(90deg,#c4c4c4 0,#c4c4c4 1px,transparent 1px,transparent 2px)"></div><svg style="left:235px;top:236px" width="16" height="16" viewBox="0 0 16 16" shape-rendering="crispEdges" ><rect x="0" y="0" width="3" height="1" fill="#000"/><rect x="1" y="1" width="1" height="3" fill="#000"/><rect x="5" y="0" width="3" height="1" fill="#000"/><rect x="6" y="1" width="1" height="3" fill="#000"/><rect x="10" y="0" width="3" height="1" fill="#000"/><rect x="11" y="1" width="1" height="3" fill="#000"/><rect x="0" y="3" width="14" height="1" fill="#000"/><rect x="13" y="0" width="1" height="3" fill="#000"/><rect x="1" y="6" width="14" height="8" fill="#b8b8a8"/><rect x="1" y="6" width="14" height="1" fill="#404040"/><rect x="0" y="7" width="1" height="8" fill="#404040"/><rect x="15" y="7" width="1" height="8" fill="#000"/><rect x="0" y="14" width="16" height="1" fill="#000"/><rect x="2" y="9" width="9" height="1" fill="#e8e8e0"/><rect x="2" y="11" width="9" height="1" fill="#505050"/><rect x="12" y="9" width="2" height="3" fill="#c8b820"/></svg><div class="t" style="left:255.2px;top:237px;letter-spacing:-0.041px;">Управление дисками</div><div style="left:210px;top:260px;width:5px;height:1px;background:repeating-linear-gradient(90deg,#c4c4c4 0,#c4c4c4 1px,transparent 1px,transparent 2px)"></div><svg style="left:216px;top:252px" width="16" height="16" viewBox="0 0 16 16" shape-rendering="crispEdges" ><rect x="2" y="0" width="8" height="1" fill="#a4a0a4"/><rect x="1" y="1" width="1" height="14" fill="#8c888c"/><rect x="2" y="1" width="8" height="14" fill="#dcd4d8"/><rect x="10" y="1" width="1" height="14" fill="#4c484c"/><rect x="1" y="15" width="10" height="1" fill="#242024"/><rect x="2" y="3" width="7" height="1" fill="#6c686c"/><rect x="2" y="4" width="7" height="1" fill="#fff"/><rect x="2" y="6" width="7" height="1" fill="#6c686c"/><rect x="2" y="7" width="7" height="1" fill="#fff"/><circle cx="11" cy="8.5" r="3.6" fill="#e0e028" stroke="#282800" stroke-width="1" shape-rendering="auto"/><circle cx="11" cy="8.5" r="1.3" fill="#fff" stroke="#282800" stroke-width="0.7" shape-rendering="auto"/><rect x="10" y="3" width="2" height="2" fill="#c8c820"/><rect x="10" y="12" width="2" height="2" fill="#c8c820"/><rect x="6" y="8" width="2" height="2" fill="#c8c820"/><rect x="14" y="8" width="2" height="2" fill="#c8c820"/><rect x="7" y="4" width="2" height="2" fill="#282800"/><rect x="13" y="4" width="2" height="2" fill="#282800"/><rect x="7" y="11" width="2" height="2" fill="#282800"/><rect x="13" y="11" width="2" height="2" fill="#282800"/></svg><svg style="left:202px;top:257px" width="7" height="7" viewBox="0 0 7 7"><path d="M6 1 L6 6.5 L0.5 6.5 Z" fill="#484848" stroke="#282828" stroke-width="0.8"/></svg><div class="t" style="left:236.2px;top:253px;letter-spacing:-0.049px;">Службы и приложения</div><div style="left:229px;top:276px;width:5px;height:1px;background:repeating-linear-gradient(90deg,#c4c4c4 0,#c4c4c4 1px,transparent 1px,transparent 2px)"></div><svg style="left:235px;top:268px" width="16" height="16" viewBox="0 0 16 16" shape-rendering="crispEdges" ><rect x="3" y="0" width="8" height="1" fill="#a4a0a4"/><rect x="2" y="1" width="1" height="14" fill="#8c888c"/><rect x="3" y="1" width="8" height="14" fill="#dcd4d8"/><rect x="11" y="1" width="2" height="14" fill="#4c484c"/><rect x="11" y="0" width="1" height="1" fill="#4c484c"/><rect x="2" y="15" width="11" height="1" fill="#242024"/><rect x="3" y="3" width="8" height="1" fill="#6c686c"/><rect x="3" y="4" width="8" height="1" fill="#fff"/><rect x="3" y="6" width="8" height="1" fill="#6c686c"/><rect x="3" y="7" width="8" height="1" fill="#fff"/><rect x="3" y="9" width="8" height="1" fill="#b4acb0"/><rect x="8" y="12" width="1" height="1" fill="#404040"/></svg><svg style="left:221px;top:272px" width="7" height="10" viewBox="0 0 7 10"><path d="M1.3 0.8 L5.6 4.5 L1.3 8.2 Z" fill="#fff" stroke="#a4a4a4" stroke-width="1"/></svg><div class="t" style="left:255.2px;top:269px;letter-spacing:-1.042px;">DHCP</div><div style="left:229px;top:292px;width:5px;height:1px;background:repeating-linear-gradient(90deg,#c4c4c4 0,#c4c4c4 1px,transparent 1px,transparent 2px)"></div><svg style="left:235px;top:284px" width="16" height="16" viewBox="0 0 16 16" shape-rendering="crispEdges" ><rect x="3" y="0" width="8" height="1" fill="#a4a0a4"/><rect x="2" y="1" width="1" height="14" fill="#8c888c"/><rect x="3" y="1" width="8" height="14" fill="#dcd4d8"/><rect x="11" y="1" width="2" height="14" fill="#4c484c"/><rect x="11" y="0" width="1" height="1" fill="#4c484c"/><rect x="2" y="15" width="11" height="1" fill="#242024"/><rect x="3" y="3" width="8" height="1" fill="#6c686c"/><rect x="3" y="4" width="8" height="1" fill="#fff"/><rect x="3" y="6" width="8" height="1" fill="#6c686c"/><rect x="3" y="7" width="8" height="1" fill="#fff"/><rect x="3" y="9" width="8" height="1" fill="#b4acb0"/><rect x="8" y="12" width="1" height="1" fill="#404040"/></svg><svg style="left:221px;top:288px" width="7" height="10" viewBox="0 0 7 10"><path d="M1.3 0.8 L5.6 4.5 L1.3 8.2 Z" fill="#fff" stroke="#a4a4a4" stroke-width="1"/></svg><div class="t" style="left:255.2px;top:285px;letter-spacing:-0.137px;">Телефония</div><div style="left:224px;top:308px;width:10px;height:1px;background:repeating-linear-gradient(90deg,#c4c4c4 0,#c4c4c4 1px,transparent 1px,transparent 2px)"></div><svg style="left:235px;top:300px" width="16" height="16" viewBox="0 0 16 16" shape-rendering="crispEdges" ><circle cx="5.5" cy="5" r="3.6" fill="#d8d8d8" stroke="#202020" stroke-width="1" shape-rendering="auto"/><circle cx="5.5" cy="5" r="1.2" fill="#fff" stroke="#202020" stroke-width="0.7" shape-rendering="auto"/><rect x="5" y="0" width="2" height="1" fill="#202020"/><rect x="0" y="4" width="1" height="2" fill="#202020"/><rect x="5" y="9" width="2" height="1" fill="#202020"/><rect x="1" y="1" width="2" height="2" fill="#202020"/><rect x="8" y="1" width="2" height="2" fill="#202020"/><rect x="1" y="7" width="2" height="2" fill="#202020"/><circle cx="10.5" cy="11" r="3.8" fill="#e0e028" stroke="#282800" stroke-width="1" shape-rendering="auto"/><circle cx="10.5" cy="11" r="1.3" fill="#fff" stroke="#282800" stroke-width="0.7" shape-rendering="auto"/><rect x="10" y="6" width="2" height="1" fill="#282800"/><rect x="15" y="10" width="1" height="2" fill="#282800"/><rect x="10" y="15" width="2" height="1" fill="#282800"/><rect x="5" y="10" width="1" height="2" fill="#282800"/><rect x="13" y="7" width="2" height="2" fill="#282800"/><rect x="13" y="13" width="2" height="2" fill="#282800"/><rect x="6" y="13" width="2" height="2" fill="#282800"/></svg><div class="t" style="left:255.2px;top:301px;letter-spacing:-0.062px;">Службы</div><div style="left:224px;top:324px;width:10px;height:1px;background:repeating-linear-gradient(90deg,#c4c4c4 0,#c4c4c4 1px,transparent 1px,transparent 2px)"></div><svg style="left:235px;top:316px" width="16" height="16" viewBox="0 0 16 16" shape-rendering="crispEdges" ><path d="M6 0 L9 0 L10 2 L10 5 L11 7 L4 7 L5 5 L5 2 Z" fill="#28b028" shape-rendering="auto"/><rect x="6" y="2" width="2" height="2" fill="#70e070"/><path d="M1 7 L7 7 L4 11 Z" fill="#1830c0" shape-rendering="auto"/><rect x="8" y="7" width="5" height="7" fill="#101868"/><rect x="9" y="8" width="3" height="5" fill="#f4f4ff"/><rect x="9" y="9" width="3" height="1" fill="#101868"/><rect x="9" y="11" width="3" height="1" fill="#101868"/><rect x="10" y="5" width="2" height="2" fill="#101010"/><rect x="2" y="11" width="2" height="2" fill="#e8e838"/><rect x="5" y="12" width="2" height="2" fill="#40d8e8"/><rect x="0" y="6" width="2" height="1" fill="#e8e838"/></svg><div class="t" style="left:255.2px;top:317px;letter-spacing:-0.059px;">Управляющий элемент WMI</div><div style="left:229px;top:340px;width:5px;height:1px;background:repeating-linear-gradient(90deg,#c4c4c4 0,#c4c4c4 1px,transparent 1px,transparent 2px)"></div><svg style="left:235px;top:332px" width="16" height="16" viewBox="0 0 16 16" shape-rendering="crispEdges" ><rect x="0" y="1" width="15" height="13" fill="#202428"/><rect x="1" y="2" width="13" height="11" fill="#b83818"/><path d="M1 2 L8 2 L14 8 L14 13 L9 13 L1 5 Z" fill="#e06830" shape-rendering="auto"/><rect x="9" y="1" width="6" height="3" fill="#207868"/><circle cx="6.5" cy="6.5" r="3.2" fill="#80dce8" stroke="#181c20" stroke-width="1" shape-rendering="auto"/><rect x="9" y="9" width="5" height="1" fill="#181c20"/><rect x="1" y="11" width="13" height="1" fill="#e8e0e0"/><rect x="0" y="12" width="7" height="2" fill="#1838b0"/><path d="M0 13 L4 9 L5 10 L1 14 Z" fill="#2858e0" shape-rendering="auto"/></svg><svg style="left:221px;top:336px" width="7" height="10" viewBox="0 0 7 10"><path d="M1.3 0.8 L5.6 4.5 L1.3 8.2 Z" fill="#fff" stroke="#a4a4a4" stroke-width="1"/></svg><div class="t" style="left:255.2px;top:333px;letter-spacing:0.001px;">Служба индексирования</div><div style="left:229px;top:356px;width:5px;height:1px;background:repeating-linear-gradient(90deg,#c4c4c4 0,#c4c4c4 1px,transparent 1px,transparent 2px)"></div><svg style="left:235px;top:348px" width="16" height="16" viewBox="0 0 16 16" shape-rendering="crispEdges" ><circle cx="8" cy="3.6" r="3.4" fill="#1830b0" stroke="#0c1460" stroke-width="0.8" shape-rendering="auto"/><rect x="6" y="1" width="2" height="2" fill="#40b8c8"/><rect x="8" y="4" width="2" height="1" fill="#40b8c8"/><rect x="7" y="7" width="2" height="2" fill="#202020"/><rect x="5" y="8" width="6" height="4" fill="#2838a8"/><rect x="6" y="9" width="4" height="2" fill="#f4f4ff"/><rect x="1" y="11" width="14" height="1" fill="#2838a8"/><rect x="1" y="11" width="1" height="3" fill="#2838a8"/><rect x="14" y="11" width="1" height="3" fill="#2838a8"/><rect x="7" y="12" width="2" height="3" fill="#2838a8"/><rect x="0" y="14" width="3" height="1" fill="#2838a8"/><rect x="13" y="14" width="3" height="1" fill="#2838a8"/><rect x="5" y="14" width="6" height="1" fill="#202020"/></svg><svg style="left:221px;top:353px" width="7" height="7" viewBox="0 0 7 7"><path d="M6 1 L6 6.5 L0.5 6.5 Z" fill="#484848" stroke="#282828" stroke-width="0.8"/></svg><div class="t" style="left:255.2px;top:349px;letter-spacing:-0.908px;">DNS</div><div style="left:248px;top:372px;width:5px;height:1px;background:repeating-linear-gradient(90deg,#c4c4c4 0,#c4c4c4 1px,transparent 1px,transparent 2px)"></div><svg style="left:254px;top:364px" width="16" height="16" viewBox="0 0 16 16" shape-rendering="crispEdges" ><rect x="3" y="0" width="8" height="1" fill="#a4a0a4"/><rect x="2" y="1" width="1" height="14" fill="#8c888c"/><rect x="3" y="1" width="8" height="14" fill="#dcd4d8"/><rect x="11" y="1" width="2" height="14" fill="#4c484c"/><rect x="11" y="0" width="1" height="1" fill="#4c484c"/><rect x="2" y="15" width="11" height="1" fill="#242024"/><rect x="3" y="3" width="8" height="1" fill="#6c686c"/><rect x="3" y="4" width="8" height="1" fill="#fff"/><rect x="3" y="6" width="8" height="1" fill="#6c686c"/><rect x="3" y="7" width="8" height="1" fill="#fff"/><rect x="3" y="9" width="8" height="1" fill="#b4acb0"/><rect x="8" y="12" width="1" height="1" fill="#404040"/></svg><svg style="left:240px;top:369px" width="7" height="7" viewBox="0 0 7 7"><path d="M6 1 L6 6.5 L0.5 6.5 Z" fill="#484848" stroke="#282828" stroke-width="0.8"/></svg><div class="t" style="left:274.2px;top:365px;letter-spacing:-1.123px;">SERVER</div><div style="left:267px;top:388px;width:5px;height:1px;background:repeating-linear-gradient(90deg,#c4c4c4 0,#c4c4c4 1px,transparent 1px,transparent 2px)"></div><svg style="left:273px;top:380px" width="16" height="16" viewBox="0 0 16 16" shape-rendering="crispEdges" ><rect x="1" y="1" width="6" height="1" fill="#585020"/><rect x="0" y="2" width="1" height="13" fill="#585020"/><rect x="1" y="2" width="6" height="1" fill="#f4eca0"/><rect x="7" y="2" width="8" height="1" fill="#585020"/><rect x="1" y="3" width="14" height="11" fill="#ece490"/><rect x="15" y="3" width="1" height="12" fill="#282410"/><rect x="0" y="14" width="16" height="2" fill="#282410"/><rect x="14" y="3" width="1" height="11" fill="#8c8440"/><rect x="4" y="4" width="9" height="9" fill="#fff"/><rect x="4" y="4" width="9" height="1" fill="#282828"/><rect x="12" y="4" width="1" height="9" fill="#282828"/><rect x="4" y="12" width="9" height="1" fill="#282828"/><rect x="4" y="4" width="1" height="9" fill="#282828"/><rect x="2" y="4" width="2" height="1" fill="#101010"/><rect x="2" y="6" width="2" height="1" fill="#101010"/><rect x="2" y="8" width="2" height="1" fill="#101010"/><rect x="2" y="10" width="2" height="1" fill="#101010"/><rect x="2" y="12" width="2" height="1" fill="#101010"/><rect x="6" y="7" width="1" height="4" fill="#c82020"/><rect x="7" y="9" width="2" height="1" fill="#c82020"/><rect x="9" y="6" width="1" height="5" fill="#2020c8"/><rect x="10" y="6" width="1" height="1" fill="#2020c8"/><rect x="8" y="6" width="1" height="1" fill="#c82020"/></svg><svg style="left:259px;top:384px" width="7" height="10" viewBox="0 0 7 10"><path d="M1.3 0.8 L5.6 4.5 L1.3 8.2 Z" fill="#fff" stroke="#a4a4a4" stroke-width="1"/></svg><div class="t" style="left:293.2px;top:381px;letter-spacing:-0.123px;">Просмотр событий</div><div style="left:267px;top:404px;width:5px;height:1px;background:repeating-linear-gradient(90deg,#c4c4c4 0,#c4c4c4 1px,transparent 1px,transparent 2px)"></div><svg style="left:273px;top:396px" width="16" height="16" viewBox="0 0 16 16" shape-rendering="crispEdges" ><rect x="2" y="2" width="5" height="1" fill="#706828"/><rect x="1" y="3" width="1" height="11" fill="#706828"/><rect x="2" y="3" width="5" height="1" fill="#f4eca0"/><rect x="7" y="3" width="7" height="1" fill="#706828"/><rect x="2" y="4" width="12" height="10" fill="#e8e070"/><rect x="2" y="4" width="12" height="1" fill="#f8f4b0"/><rect x="14" y="4" width="1" height="11" fill="#383410"/><rect x="1" y="14" width="14" height="1" fill="#383410"/><rect x="13" y="5" width="1" height="9" fill="#b8b050"/></svg><svg style="left:259px;top:400px" width="7" height="10" viewBox="0 0 7 10"><path d="M1.3 0.8 L5.6 4.5 L1.3 8.2 Z" fill="#fff" stroke="#a4a4a4" stroke-width="1"/></svg><div class="t" style="left:293.2px;top:397px;letter-spacing:-0.111px;">Зоны прямого просмотра</div><div style="left:267px;top:420px;width:5px;height:1px;background:repeating-linear-gradient(90deg,#c4c4c4 0,#c4c4c4 1px,transparent 1px,transparent 2px)"></div><svg style="left:273px;top:412px" width="16" height="16" viewBox="0 0 16 16" shape-rendering="crispEdges" ><rect x="2" y="2" width="5" height="1" fill="#706828"/><rect x="1" y="3" width="1" height="11" fill="#706828"/><rect x="2" y="3" width="5" height="1" fill="#f4eca0"/><rect x="7" y="3" width="7" height="1" fill="#706828"/><rect x="2" y="4" width="12" height="10" fill="#e8e070"/><rect x="2" y="4" width="12" height="1" fill="#f8f4b0"/><rect x="14" y="4" width="1" height="11" fill="#383410"/><rect x="1" y="14" width="14" height="1" fill="#383410"/><rect x="13" y="5" width="1" height="9" fill="#b8b050"/></svg><svg style="left:259px;top:416px" width="7" height="10" viewBox="0 0 7 10"><path d="M1.3 0.8 L5.6 4.5 L1.3 8.2 Z" fill="#fff" stroke="#a4a4a4" stroke-width="1"/></svg><div class="t" style="left:293.2px;top:413px;letter-spacing:-0.020px;">Зоны обратного просмотра</div><div style="left:229px;top:436px;width:5px;height:1px;background:repeating-linear-gradient(90deg,#c4c4c4 0,#c4c4c4 1px,transparent 1px,transparent 2px)"></div><svg style="left:235px;top:428px" width="16" height="16" viewBox="0 0 16 16" shape-rendering="crispEdges" ><rect x="2" y="0" width="8" height="1" fill="#a4a0a4"/><rect x="1" y="1" width="1" height="13" fill="#8c888c"/><rect x="2" y="1" width="8" height="13" fill="#dcd4d8"/><rect x="10" y="1" width="2" height="12" fill="#4c484c"/><rect x="1" y="14" width="10" height="1" fill="#242024"/><rect x="2" y="3" width="8" height="1" fill="#6c686c"/><rect x="2" y="4" width="8" height="1" fill="#fff"/><rect x="2" y="6" width="8" height="1" fill="#6c686c"/><rect x="2" y="7" width="8" height="1" fill="#fff"/><circle cx="10.5" cy="10.8" r="4.5" fill="#fff" stroke="#101010" stroke-width="1" shape-rendering="auto"/><path d="M10.5 7.6 L13.6 10.8 L12 10.8 L12 13.4 L9 13.4 L9 10.8 L7.4 10.8 Z" fill="#189030" shape-rendering="auto"/></svg><svg style="left:221px;top:433px" width="7" height="7" viewBox="0 0 7 7"><path d="M6 1 L6 6.5 L0.5 6.5 Z" fill="#484848" stroke="#282828" stroke-width="0.8"/></svg><div class="t" style="left:255.2px;top:429px;letter-spacing:0.001px;">Маршрутизация и удаленный доступ</div><div style="left:243px;top:452px;width:10px;height:1px;background:repeating-linear-gradient(90deg,#c4c4c4 0,#c4c4c4 1px,transparent 1px,transparent 2px)"></div><svg style="left:254px;top:444px" width="16" height="16" viewBox="0 0 16 16" shape-rendering="crispEdges" ><rect x="0" y="0" width="16" height="1" fill="#000"/><rect x="0" y="1" width="16" height="1" fill="#202020"/><rect x="7" y="0" width="2" height="3" fill="#e8e030"/><rect x="4" y="3" width="7" height="1" fill="#808080"/><rect x="3" y="3" width="1" height="7" fill="#909090"/><rect x="4" y="4" width="7" height="5" fill="#e4e8e4"/><rect x="11" y="3" width="1" height="7" fill="#101010"/><rect x="5" y="5" width="5" height="3" fill="#308890"/><rect x="6" y="5" width="3" height="1" fill="#70b8c0"/><rect x="4" y="9" width="8" height="1" fill="#101010"/><rect x="3" y="10" width="1" height="1" fill="#000"/><rect x="4" y="11" width="8" height="1" fill="#000"/><rect x="12" y="9" width="1" height="3" fill="#000"/><rect x="2" y="11" width="11" height="1" fill="#000"/><rect x="0" y="13" width="16" height="1" fill="#000"/><rect x="0" y="14" width="16" height="1" fill="#181818"/><rect x="7" y="12" width="2" height="4" fill="#e8e030"/><rect x="0" y="15" width="7" height="1" fill="#fff"/><rect x="9" y="15" width="7" height="1" fill="#fff"/></svg><div class="t" style="left:274.2px;top:445px;letter-spacing:-0.036px;">Интерфейсы сети</div><div style="left:248px;top:468px;width:5px;height:1px;background:repeating-linear-gradient(90deg,#c4c4c4 0,#c4c4c4 1px,transparent 1px,transparent 2px)"></div><svg style="left:254px;top:460px" width="16" height="16" viewBox="0 0 16 16" shape-rendering="crispEdges" ><rect x="0" y="0" width="16" height="1" fill="#000"/><rect x="0" y="1" width="16" height="1" fill="#202020"/><rect x="7" y="0" width="2" height="3" fill="#e8e030"/><rect x="4" y="3" width="7" height="1" fill="#808080"/><rect x="3" y="3" width="1" height="7" fill="#909090"/><rect x="4" y="4" width="7" height="5" fill="#e4e8e4"/><rect x="11" y="3" width="1" height="7" fill="#101010"/><rect x="5" y="5" width="5" height="3" fill="#308890"/><rect x="6" y="5" width="3" height="1" fill="#70b8c0"/><rect x="4" y="9" width="8" height="1" fill="#101010"/><rect x="3" y="10" width="1" height="1" fill="#000"/><rect x="4" y="11" width="8" height="1" fill="#000"/><rect x="12" y="9" width="1" height="3" fill="#000"/><rect x="2" y="11" width="11" height="1" fill="#000"/><rect x="0" y="13" width="16" height="1" fill="#000"/><rect x="0" y="14" width="16" height="1" fill="#181818"/><rect x="7" y="12" width="2" height="4" fill="#e8e030"/><rect x="0" y="15" width="7" height="1" fill="#fff"/><rect x="9" y="15" width="7" height="1" fill="#fff"/></svg><svg style="left:240px;top:465px" width="7" height="7" viewBox="0 0 7 7"><path d="M6 1 L6 6.5 L0.5 6.5 Z" fill="#484848" stroke="#282828" stroke-width="0.8"/></svg><div class="t" style="left:274.2px;top:461px;letter-spacing:-0.070px;">IP-маршрутизация</div><div style="left:262px;top:484px;width:10px;height:1px;background:repeating-linear-gradient(90deg,#c4c4c4 0,#c4c4c4 1px,transparent 1px,transparent 2px)"></div><div style="left:291px;top:476px;width:44px;height:16px;background:#f1f0f1"></div><svg style="left:273px;top:476px" width="16" height="16" viewBox="0 0 16 16" shape-rendering="crispEdges" ><rect x="0" y="0" width="16" height="1" fill="#000"/><rect x="0" y="1" width="16" height="1" fill="#202020"/><rect x="7" y="0" width="2" height="3" fill="#e8e030"/><rect x="4" y="3" width="7" height="1" fill="#808080"/><rect x="3" y="3" width="1" height="7" fill="#909090"/><rect x="4" y="4" width="7" height="5" fill="#e4e8e4"/><rect x="11" y="3" width="1" height="7" fill="#101010"/><rect x="5" y="5" width="5" height="3" fill="#308890"/><rect x="6" y="5" width="3" height="1" fill="#70b8c0"/><rect x="4" y="9" width="8" height="1" fill="#101010"/><rect x="3" y="10" width="1" height="1" fill="#000"/><rect x="4" y="11" width="8" height="1" fill="#000"/><rect x="12" y="9" width="1" height="3" fill="#000"/><rect x="2" y="11" width="11" height="1" fill="#000"/><rect x="0" y="13" width="16" height="1" fill="#000"/><rect x="0" y="14" width="16" height="1" fill="#181818"/><rect x="7" y="12" width="2" height="4" fill="#e8e030"/><rect x="0" y="15" width="7" height="1" fill="#fff"/><rect x="9" y="15" width="7" height="1" fill="#fff"/></svg><div class="t" style="left:293.2px;top:477px;letter-spacing:-0.134px;">Общие</div><div style="left:262px;top:500px;width:10px;height:1px;background:repeating-linear-gradient(90deg,#c4c4c4 0,#c4c4c4 1px,transparent 1px,transparent 2px)"></div><svg style="left:273px;top:492px" width="16" height="16" viewBox="0 0 16 16" shape-rendering="crispEdges" ><rect x="0" y="0" width="16" height="1" fill="#000"/><rect x="0" y="1" width="16" height="1" fill="#202020"/><rect x="7" y="0" width="2" height="3" fill="#e8e030"/><rect x="4" y="3" width="7" height="1" fill="#808080"/><rect x="3" y="3" width="1" height="7" fill="#909090"/><rect x="4" y="4" width="7" height="5" fill="#e4e8e4"/><rect x="11" y="3" width="1" height="7" fill="#101010"/><rect x="5" y="5" width="5" height="3" fill="#308890"/><rect x="6" y="5" width="3" height="1" fill="#70b8c0"/><rect x="4" y="9" width="8" height="1" fill="#101010"/><rect x="3" y="10" width="1" height="1" fill="#000"/><rect x="4" y="11" width="8" height="1" fill="#000"/><rect x="12" y="9" width="1" height="3" fill="#000"/><rect x="2" y="11" width="11" height="1" fill="#000"/><rect x="0" y="13" width="16" height="1" fill="#000"/><rect x="0" y="14" width="16" height="1" fill="#181818"/><rect x="7" y="12" width="2" height="4" fill="#e8e030"/><rect x="0" y="15" width="7" height="1" fill="#fff"/><rect x="9" y="15" width="7" height="1" fill="#fff"/></svg><div class="t" style="left:293.2px;top:493px;letter-spacing:0.047px;">Статические маршруты</div><div style="left:262px;top:516px;width:10px;height:1px;background:repeating-linear-gradient(90deg,#c4c4c4 0,#c4c4c4 1px,transparent 1px,transparent 2px)"></div><svg style="left:273px;top:508px" width="16" height="16" viewBox="0 0 16 16" shape-rendering="crispEdges" ><rect x="0" y="0" width="16" height="1" fill="#000"/><rect x="0" y="1" width="16" height="1" fill="#202020"/><rect x="7" y="0" width="2" height="3" fill="#e8e030"/><rect x="4" y="3" width="7" height="1" fill="#808080"/><rect x="3" y="3" width="1" height="7" fill="#909090"/><rect x="4" y="4" width="7" height="5" fill="#e4e8e4"/><rect x="11" y="3" width="1" height="7" fill="#101010"/><rect x="5" y="5" width="5" height="3" fill="#308890"/><rect x="6" y="5" width="3" height="1" fill="#70b8c0"/><rect x="4" y="9" width="8" height="1" fill="#101010"/><rect x="3" y="10" width="1" height="1" fill="#000"/><rect x="4" y="11" width="8" height="1" fill="#000"/><rect x="12" y="9" width="1" height="3" fill="#000"/><rect x="2" y="11" width="11" height="1" fill="#000"/><rect x="0" y="13" width="16" height="1" fill="#000"/><rect x="0" y="14" width="16" height="1" fill="#181818"/><rect x="7" y="12" width="2" height="4" fill="#e8e030"/><rect x="0" y="15" width="7" height="1" fill="#fff"/><rect x="9" y="15" width="7" height="1" fill="#fff"/></svg><div class="t" style="left:293.2px;top:509px;letter-spacing:-0.679px;">IGMP</div><div style="left:262px;top:532px;width:10px;height:1px;background:repeating-linear-gradient(90deg,#c4c4c4 0,#c4c4c4 1px,transparent 1px,transparent 2px)"></div><svg style="left:273px;top:524px" width="16" height="16" viewBox="0 0 16 16" shape-rendering="crispEdges" ><rect x="0" y="0" width="16" height="1" fill="#000"/><rect x="0" y="1" width="16" height="1" fill="#202020"/><rect x="7" y="0" width="2" height="3" fill="#e8e030"/><rect x="4" y="3" width="7" height="1" fill="#808080"/><rect x="3" y="3" width="1" height="7" fill="#909090"/><rect x="4" y="4" width="7" height="5" fill="#e4e8e4"/><rect x="11" y="3" width="1" height="7" fill="#101010"/><rect x="5" y="5" width="5" height="3" fill="#308890"/><rect x="6" y="5" width="3" height="1" fill="#70b8c0"/><rect x="4" y="9" width="8" height="1" fill="#101010"/><rect x="3" y="10" width="1" height="1" fill="#000"/><rect x="4" y="11" width="8" height="1" fill="#000"/><rect x="12" y="9" width="1" height="3" fill="#000"/><rect x="2" y="11" width="11" height="1" fill="#000"/><rect x="0" y="13" width="16" height="1" fill="#000"/><rect x="0" y="14" width="16" height="1" fill="#181818"/><rect x="7" y="12" width="2" height="4" fill="#e8e030"/><rect x="0" y="15" width="7" height="1" fill="#fff"/><rect x="9" y="15" width="7" height="1" fill="#fff"/></svg><div class="t" style="left:293.2px;top:525px;letter-spacing:-0.109px;">NAT/Простой брандмауэр</div><div style="left:243px;top:548px;width:10px;height:1px;background:repeating-linear-gradient(90deg,#c4c4c4 0,#c4c4c4 1px,transparent 1px,transparent 2px)"></div><svg style="left:254px;top:540px" width="16" height="16" viewBox="0 0 16 16" shape-rendering="crispEdges" ><rect x="3" y="0" width="11" height="9" fill="#fff"/><rect x="3" y="0" width="11" height="1" fill="#404040"/><rect x="3" y="0" width="1" height="9" fill="#404040"/><rect x="13" y="0" width="1" height="9" fill="#404040"/><rect x="3" y="8" width="11" height="1" fill="#404040"/><rect x="5" y="2" width="7" height="1" fill="#2040c0"/><rect x="5" y="4" width="7" height="1" fill="#2040c0"/><rect x="5" y="6" width="5" height="1" fill="#2040c0"/><path d="M13 1 L6 10 L5 13 L8 11 L15 3 Z" fill="#e8d020" stroke="#605000" stroke-width="0.8"/><rect x="3" y="13" width="6" height="3" fill="#c8b820"/><rect x="0" y="9" width="5" height="2" fill="#404040"/></svg><div class="t" style="left:274.2px;top:541px;letter-spacing:0.132px;">Политика удаленного доступа</div><div style="left:243px;top:564px;width:10px;height:1px;background:repeating-linear-gradient(90deg,#c4c4c4 0,#c4c4c4 1px,transparent 1px,transparent 2px)"></div><svg style="left:254px;top:556px" width="16" height="16" viewBox="0 0 16 16" shape-rendering="crispEdges" ><rect x="2" y="2" width="5" height="1" fill="#706828"/><rect x="1" y="3" width="1" height="11" fill="#706828"/><rect x="2" y="3" width="5" height="1" fill="#f4eca0"/><rect x="7" y="3" width="7" height="1" fill="#706828"/><rect x="2" y="4" width="12" height="10" fill="#e8e070"/><rect x="2" y="4" width="12" height="1" fill="#f8f4b0"/><rect x="14" y="4" width="1" height="11" fill="#383410"/><rect x="1" y="14" width="14" height="1" fill="#383410"/><rect x="13" y="5" width="1" height="9" fill="#b8b050"/></svg><div class="t" style="left:274.2px;top:557px;letter-spacing:0.077px;">Ведение журнала удаленного доступа</div></div></div>
<div style="left:193px;top:606px;width:287px;height:16px;background:linear-gradient(180deg,#f2f2f2 0,#e6e6e6 45%,#e9e9e9 70%,#f0f0f0 100%)"></div><svg style="left:200px;top:609px" width="5" height="8" viewBox="0 0 5 8"><path d="M4.5 0.3 L4.5 7.7 L0.5 4 Z" fill="#3c3c3c"/></svg><svg style="left:468px;top:609px" width="5" height="8" viewBox="0 0 5 8"><path d="M0.5 0.3 L0.5 7.7 L4.5 4 Z" fill="#3c3c3c"/></svg><div style="left:213px;top:606px;width:234px;height:15px;border:1px solid #8f9094;border-radius:2px;background:linear-gradient(180deg,#f5f5f6 0,#e8e8ea 45%,#d0d0d3 55%,#c8c8cc 100%)"></div><div style="left:326px;top:610px;width:1px;height:7px;background:#404044"></div><div style="left:327px;top:610px;width:1px;height:7px;background:rgba(255,255,255,.75)"></div><div style="left:329px;top:610px;width:1px;height:7px;background:#404044"></div><div style="left:330px;top:610px;width:1px;height:7px;background:rgba(255,255,255,.75)"></div><div style="left:332px;top:610px;width:1px;height:7px;background:#404044"></div><div style="left:333px;top:610px;width:1px;height:7px;background:rgba(255,255,255,.75)"></div>
<div style="left:485px;top:91px;width:855px;height:515px;overflow:hidden"><div style="left:-485px;top:-91px;width:1600px;height:900px"><div style="left:485px;top:91px;width:855px;height:20px;background:linear-gradient(180deg,#ffffff 0,#ffffff 45%,#f9f9fb 55%,#f5f5f8 100%);border-bottom:1px solid #dcdce2"></div><div class="t" style="left:497px;top:95px;letter-spacing:-0.171px;">Интерфейс</div><div class="t" style="left:674.5px;top:95px;letter-spacing:0.221px;">Тип</div><div class="t" style="left:764.5px;top:95px;letter-spacing:0.046px;">IP-адрес</div><div class="t" style="left:904px;top:95px;letter-spacing:-0.080px;">Состояние администрирования</div><div class="t" style="left:1090px;top:95px;letter-spacing:-0.042px;">Состояние операции</div><div class="t" style="left:1222px;top:95px;letter-spacing:0.127px;">Входящих байт</div><div class="t" style="left:1324px;top:95px;">Исходящих байт</div><div style="left:665px;top:93px;width:1px;height:17px;background:linear-gradient(180deg,#f4f4f6 0,#dcdce2 100%)"></div><div style="left:755px;top:93px;width:1px;height:17px;background:linear-gradient(180deg,#f4f4f6 0,#dcdce2 100%)"></div><div style="left:895px;top:93px;width:1px;height:17px;background:linear-gradient(180deg,#f4f4f6 0,#dcdce2 100%)"></div><div style="left:1081px;top:93px;width:1px;height:17px;background:linear-gradient(180deg,#f4f4f6 0,#dcdce2 100%)"></div><div style="left:1213px;top:93px;width:1px;height:17px;background:linear-gradient(180deg,#f4f4f6 0,#dcdce2 100%)"></div><div style="left:1315px;top:93px;width:1px;height:17px;background:linear-gradient(180deg,#f4f4f6 0,#dcdce2 100%)"></div><svg style="left:565.5px;top:98.5px" width="8" height="7" viewBox="0 0 8 7"><path d="M0.5 0.5 L7.5 0.5 L4 6 Z" fill="#fafafa" stroke="#c4c4c8" stroke-width="1"/></svg><svg style="left:490px;top:112px" width="16" height="16" viewBox="0 0 16 16" shape-rendering="crispEdges" ><rect x="1" y="0" width="6" height="1" fill="#3c6c64"/><rect x="1" y="1" width="5" height="4" fill="#68b4a8"/><rect x="2" y="1" width="3" height="2" fill="#b0e4dc"/><rect x="6" y="1" width="1" height="4" fill="#1c3c38"/><rect x="1" y="4" width="5" height="1" fill="#d0e8e4"/><rect x="9" y="0" width="6" height="1" fill="#3c6c64"/><rect x="9" y="1" width="5" height="4" fill="#68b4a8"/><rect x="10" y="1" width="3" height="2" fill="#b0e4dc"/><rect x="14" y="1" width="1" height="4" fill="#1c3c38"/><rect x="9" y="4" width="5" height="1" fill="#d0e8e4"/><rect x="0" y="5" width="16" height="2" fill="#000"/><rect x="1" y="7" width="1" height="6" fill="#8c8c8c"/><rect x="2" y="12" width="10" height="1" fill="#8c8c8c"/><rect x="12" y="7" width="1" height="1" fill="#a8a8a8"/><rect x="13" y="8" width="1" height="1" fill="#a8a8a8"/><rect x="12" y="9" width="1" height="1" fill="#a8a8a8"/><rect x="13" y="10" width="1" height="1" fill="#a8a8a8"/><rect x="12" y="11" width="1" height="1" fill="#a8a8a8"/><rect x="3" y="10" width="3" height="1" fill="#b0b0b0"/><rect x="4" y="9" width="1" height="1" fill="#b0b0b0"/><rect x="7" y="8" width="1" height="4" fill="#202020"/><rect x="8" y="10" width="3" height="1" fill="#909090"/><rect x="3" y="13" width="5" height="1" fill="#000"/><rect x="7" y="13" width="1" height="3" fill="#606060"/><rect x="9" y="13" width="2" height="1" fill="#000"/><rect x="9" y="14" width="1" height="2" fill="#000"/></svg><div class="t" style="left:507px;top:114px;letter-spacing:-0.091px;">Замыкание на себя</div><div class="t" style="left:671px;top:114px;letter-spacing:0.126px;">Замыкание н...</div><div class="t" style="left:761.5px;top:114px;letter-spacing:0.181px;">127.0.0.1</div><div class="t" style="left:901px;top:114px;letter-spacing:0.176px;">Работает</div><div class="t" style="left:1087px;top:114px;letter-spacing:0.176px;">Работает</div><div class="t" style="left:1219px;top:114px;">0</div><div class="t" style="left:1321px;top:114px;">0</div><svg style="left:490px;top:129px" width="16" height="16" viewBox="0 0 16 16" shape-rendering="crispEdges" ><rect x="1" y="0" width="6" height="1" fill="#3c6c64"/><rect x="1" y="1" width="5" height="4" fill="#68b4a8"/><rect x="2" y="1" width="3" height="2" fill="#b0e4dc"/><rect x="6" y="1" width="1" height="4" fill="#1c3c38"/><rect x="1" y="4" width="5" height="1" fill="#d0e8e4"/><rect x="9" y="0" width="6" height="1" fill="#3c6c64"/><rect x="9" y="1" width="5" height="4" fill="#68b4a8"/><rect x="10" y="1" width="3" height="2" fill="#b0e4dc"/><rect x="14" y="1" width="1" height="4" fill="#1c3c38"/><rect x="9" y="4" width="5" height="1" fill="#d0e8e4"/><rect x="0" y="5" width="16" height="2" fill="#000"/><rect x="1" y="7" width="1" height="6" fill="#8c8c8c"/><rect x="2" y="12" width="10" height="1" fill="#8c8c8c"/><rect x="12" y="7" width="1" height="1" fill="#a8a8a8"/><rect x="13" y="8" width="1" height="1" fill="#a8a8a8"/><rect x="12" y="9" width="1" height="1" fill="#a8a8a8"/><rect x="13" y="10" width="1" height="1" fill="#a8a8a8"/><rect x="12" y="11" width="1" height="1" fill="#a8a8a8"/><rect x="3" y="10" width="3" height="1" fill="#b0b0b0"/><rect x="4" y="9" width="1" height="1" fill="#b0b0b0"/><rect x="7" y="8" width="1" height="4" fill="#202020"/><rect x="8" y="10" width="3" height="1" fill="#909090"/><rect x="3" y="13" width="5" height="1" fill="#000"/><rect x="7" y="13" width="1" height="3" fill="#606060"/><rect x="9" y="13" width="2" height="1" fill="#000"/><rect x="9" y="14" width="1" height="2" fill="#000"/></svg><div class="t" style="left:507px;top:131px;letter-spacing:0.018px;">Внутренний</div><div class="t" style="left:1087px;top:131px;letter-spacing:0.095px;">Не работает</div><div class="t" style="left:1219px;top:131px;">-</div><div class="t" style="left:1321px;top:131px;">-</div><svg style="left:490px;top:146px" width="16" height="16" viewBox="0 0 16 16" shape-rendering="crispEdges" ><rect x="1" y="0" width="6" height="1" fill="#3c6c64"/><rect x="1" y="1" width="5" height="4" fill="#68b4a8"/><rect x="2" y="1" width="3" height="2" fill="#b0e4dc"/><rect x="6" y="1" width="1" height="4" fill="#1c3c38"/><rect x="1" y="4" width="5" height="1" fill="#d0e8e4"/><rect x="9" y="0" width="6" height="1" fill="#3c6c64"/><rect x="9" y="1" width="5" height="4" fill="#68b4a8"/><rect x="10" y="1" width="3" height="2" fill="#b0e4dc"/><rect x="14" y="1" width="1" height="4" fill="#1c3c38"/><rect x="9" y="4" width="5" height="1" fill="#d0e8e4"/><rect x="0" y="5" width="16" height="2" fill="#000"/><rect x="1" y="7" width="1" height="6" fill="#8c8c8c"/><rect x="2" y="12" width="10" height="1" fill="#8c8c8c"/><rect x="12" y="7" width="1" height="1" fill="#a8a8a8"/><rect x="13" y="8" width="1" height="1" fill="#a8a8a8"/><rect x="12" y="9" width="1" height="1" fill="#a8a8a8"/><rect x="13" y="10" width="1" height="1" fill="#a8a8a8"/><rect x="12" y="11" width="1" height="1" fill="#a8a8a8"/><rect x="3" y="10" width="3" height="1" fill="#b0b0b0"/><rect x="4" y="9" width="1" height="1" fill="#b0b0b0"/><rect x="7" y="8" width="1" height="4" fill="#202020"/><rect x="8" y="10" width="3" height="1" fill="#909090"/><rect x="3" y="13" width="5" height="1" fill="#000"/><rect x="7" y="13" width="1" height="3" fill="#606060"/><rect x="9" y="13" width="2" height="1" fill="#000"/><rect x="9" y="14" width="1" height="2" fill="#000"/></svg><div class="t" style="left:507px;top:148px;letter-spacing:-0.204px;">local</div><div class="t" style="left:1087px;top:148px;letter-spacing:0.176px;">Работает</div><div class="t" style="left:1219px;top:148px;letter-spacing:-0.070px;">331 616 388</div><div class="t" style="left:1321px;top:148px;letter-spacing:0.118px;">3 629 000</div><div style="left:486px;top:163px;width:854px;height:17px;background:#f3f1f3"></div><svg style="left:490px;top:163px" width="16" height="16" viewBox="0 0 16 16" shape-rendering="crispEdges" ><rect x="1" y="0" width="6" height="1" fill="#3c6c64"/><rect x="1" y="1" width="5" height="4" fill="#68b4a8"/><rect x="2" y="1" width="3" height="2" fill="#b0e4dc"/><rect x="6" y="1" width="1" height="4" fill="#1c3c38"/><rect x="1" y="4" width="5" height="1" fill="#d0e8e4"/><rect x="9" y="0" width="6" height="1" fill="#3c6c64"/><rect x="9" y="1" width="5" height="4" fill="#68b4a8"/><rect x="10" y="1" width="3" height="2" fill="#b0e4dc"/><rect x="14" y="1" width="1" height="4" fill="#1c3c38"/><rect x="9" y="4" width="5" height="1" fill="#d0e8e4"/><rect x="0" y="5" width="16" height="2" fill="#000"/><rect x="1" y="7" width="1" height="6" fill="#8c8c8c"/><rect x="2" y="12" width="10" height="1" fill="#8c8c8c"/><rect x="12" y="7" width="1" height="1" fill="#a8a8a8"/><rect x="13" y="8" width="1" height="1" fill="#a8a8a8"/><rect x="12" y="9" width="1" height="1" fill="#a8a8a8"/><rect x="13" y="10" width="1" height="1" fill="#a8a8a8"/><rect x="12" y="11" width="1" height="1" fill="#a8a8a8"/><rect x="3" y="10" width="3" height="1" fill="#b0b0b0"/><rect x="4" y="9" width="1" height="1" fill="#b0b0b0"/><rect x="7" y="8" width="1" height="4" fill="#202020"/><rect x="8" y="10" width="3" height="1" fill="#909090"/><rect x="3" y="13" width="5" height="1" fill="#000"/><rect x="7" y="13" width="1" height="3" fill="#606060"/><rect x="9" y="13" width="2" height="1" fill="#000"/><rect x="9" y="14" width="1" height="2" fill="#000"/></svg><div class="t" style="left:507px;top:165px;letter-spacing:0.463px;">Inet</div><div class="t" style="left:1087px;top:165px;letter-spacing:0.176px;">Работает</div><div class="t" style="left:1219px;top:165px;letter-spacing:0.021px;">2 011 635 463</div><div class="t" style="left:1321px;top:165px;letter-spacing:0.118px;">1 880 000</div></div></div>
<div style="left:485px;top:606px;width:855px;height:16px;background:linear-gradient(180deg,#f2f2f2 0,#e6e6e6 45%,#e9e9e9 70%,#f0f0f0 100%)"></div><svg style="left:492px;top:609px" width="5" height="8" viewBox="0 0 5 8"><path d="M4.5 0.3 L4.5 7.7 L0.5 4 Z" fill="#3c3c3c"/></svg><svg style="left:1328px;top:609px" width="5" height="8" viewBox="0 0 5 8"><path d="M0.5 0.3 L0.5 7.7 L4.5 4 Z" fill="#3c3c3c"/></svg><div style="left:505px;top:606px;width:570px;height:15px;border:1px solid #8f9094;border-radius:2px;background:linear-gradient(180deg,#f5f5f6 0,#e8e8ea 45%,#d0d0d3 55%,#c8c8cc 100%)"></div><div style="left:786px;top:610px;width:1px;height:7px;background:#404044"></div><div style="left:787px;top:610px;width:1px;height:7px;background:rgba(255,255,255,.75)"></div><div style="left:789px;top:610px;width:1px;height:7px;background:#404044"></div><div style="left:790px;top:610px;width:1px;height:7px;background:rgba(255,255,255,.75)"></div><div style="left:792px;top:610px;width:1px;height:7px;background:#404044"></div><div style="left:793px;top:610px;width:1px;height:7px;background:rgba(255,255,255,.75)"></div>
<div style="left:591px;top:126px;width:404px;height:485px;background:#f6f1f5;border:1px solid #444c58;border-radius:7px 7px 0 0"></div><div style="left:592px;top:154px;width:402px;height:456px;border-left:4px solid #e7eefa;border-right:4px solid #e7eefa;border-bottom:4px solid #e7eefa"></div><div style="left:592px;top:127px;width:402px;height:27px;background:linear-gradient(180deg,#bccadc 0,#c0cfe2 35%,#ccdbee 70%,#d5e3f5 100%);border-radius:6px 6px 0 0;border-top:1px solid #dbe6f3;border-left:1px solid #dbe6f3;border-right:1px solid #dbe6f3"></div><div class="t" style="left:600px;top:134px;color:#a4adba;font-size:12px;letter-spacing:0.187px;line-height:16px;height:16px;">Свойства: Inet</div><div style="left:946px;top:134px;width:21px;height:15px;border:1px solid #8d9db3;border-radius:2.5px;background:linear-gradient(180deg,#d5e0ee 0,#c9d6e8 45%,#bfcde1 55%,#c9d7ea 100%);box-shadow:inset 0 0 0 1px rgba(235,242,250,.55)"></div><div class="t" style="left:946px;top:134px;width:21px;text-align:center;font-weight:bold;font-size:13px;color:#f6f8fb;text-shadow:1px 0 0 #5f6c82,-1px 0 0 #5f6c82,0 1px 0 #5f6c82,0 -1px 0 #5f6c82,1px 1px 0 #5f6c82,-1px -1px 0 #5f6c82,1px -1px 0 #5f6c82,-1px 1px 0 #5f6c82;-webkit-text-stroke:0;line-height:15px;height:15px">?</div><div style="left:969px;top:134px;width:21px;height:15px;border:1px solid #8d9db3;border-radius:2.5px;background:linear-gradient(180deg,#d5e0ee 0,#c9d6e8 45%,#bfcde1 55%,#c9d7ea 100%);box-shadow:inset 0 0 0 1px rgba(235,242,250,.55)"></div><svg style="left:973px;top:137px" width="13" height="9" viewBox="0 0 13 9"><path d="M2.2 1 L10.8 8 M10.8 1 L2.2 8" stroke="#5f6c82" stroke-width="4.6" stroke-linecap="butt"/><path d="M2.2 1 L10.8 8 M10.8 1 L2.2 8" stroke="#f6f8fb" stroke-width="2.7"/></svg><div style="left:600px;top:176px;width:386px;height:395px;background:#fbf9fb;border:1px solid #8c8e94"></div><div style="left:602px;top:163px;width:193px;height:14px;background:linear-gradient(180deg,#fbfbfc 0,#efeef0 60%,#dddde0 100%);border:1px solid #8c8e94;border-bottom:none"></div><div style="left:795px;top:163px;width:190px;height:14px;background:linear-gradient(180deg,#fbfbfc 0,#efeef0 60%,#dddde0 100%);border:1px solid #8c8e94;border-bottom:none;border-left:none"></div><div style="left:602px;top:163px;width:384px;height:13px;overflow:hidden"><div style="left:-602px;top:-163px;width:1600px;height:900px"><div class="t" style="left:613px;top:166px;letter-spacing:0.069px;">Границы многоадресной области</div><div class="t" style="left:806px;top:166px;letter-spacing:0.118px;">Пульс многоадресной рассылки</div></div></div><div style="left:750px;top:579px;width:73px;height:21px;border:1px solid #6c6c70;border-radius:3px;background:linear-gradient(180deg,#f4f2f4 0,#ebe9eb 45%,#d8d6d9 55%,#c8c6ca 100%);box-shadow:inset 0 0 0 1px rgba(255,255,255,.7)"></div><div class="t" style="left:778.6px;top:582px;color:#000;">OK</div><div style="left:831px;top:579px;width:73px;height:21px;border:1px solid #6c6c70;border-radius:3px;background:linear-gradient(180deg,#f4f2f4 0,#ebe9eb 45%,#d8d6d9 55%,#c8c6ca 100%);box-shadow:inset 0 0 0 1px rgba(255,255,255,.7)"></div><div class="t" style="left:847.8px;top:582px;color:#000;">Отмена</div><div style="left:912px;top:579px;width:73px;height:21px;border:1px solid #b8b8bc;border-radius:3px;background:#f5f2f5"></div><div class="t" style="left:920.1px;top:582px;color:#a8a8ac;">При<u>м</u>енить</div>
<div style="left:552px;top:176px;width:481px;height:385px;background:#f6f1f5;border:1px solid #444c58;border-radius:7px 7px 0 0"></div><div style="left:553px;top:204px;width:479px;height:356px;border-left:4px solid #e7eefa;border-right:4px solid #e7eefa;border-bottom:4px solid #e7eefa"></div><div style="left:553px;top:177px;width:479px;height:27px;background:linear-gradient(180deg,#bccadc 0,#c0cfe2 35%,#ccdbee 70%,#d5e3f5 100%);border-radius:6px 6px 0 0;border-top:1px solid #dbe6f3;border-left:1px solid #dbe6f3;border-right:1px solid #dbe6f3"></div><div class="t" style="left:561px;top:184px;color:#a4adba;font-size:12px;letter-spacing:0.185px;line-height:16px;height:16px;">Фильтры входа</div><div style="left:985px;top:184px;width:21px;height:15px;border:1px solid #8d9db3;border-radius:2.5px;background:linear-gradient(180deg,#d5e0ee 0,#c9d6e8 45%,#bfcde1 55%,#c9d7ea 100%);box-shadow:inset 0 0 0 1px rgba(235,242,250,.55)"></div><div class="t" style="left:985px;top:184px;width:21px;text-align:center;font-weight:bold;font-size:13px;color:#f6f8fb;text-shadow:1px 0 0 #5f6c82,-1px 0 0 #5f6c82,0 1px 0 #5f6c82,0 -1px 0 #5f6c82,1px 1px 0 #5f6c82,-1px -1px 0 #5f6c82,1px -1px 0 #5f6c82,-1px 1px 0 #5f6c82;-webkit-text-stroke:0;line-height:15px;height:15px">?</div><div style="left:1008px;top:184px;width:21px;height:15px;border:1px solid #8d9db3;border-radius:2.5px;background:linear-gradient(180deg,#d5e0ee 0,#c9d6e8 45%,#bfcde1 55%,#c9d7ea 100%);box-shadow:inset 0 0 0 1px rgba(235,242,250,.55)"></div><svg style="left:1012px;top:187px" width="13" height="9" viewBox="0 0 13 9"><path d="M2.2 1 L10.8 8 M10.8 1 L2.2 8" stroke="#5f6c82" stroke-width="4.6" stroke-linecap="butt"/><path d="M2.2 1 L10.8 8 M10.8 1 L2.2 8" stroke="#f6f8fb" stroke-width="2.7"/></svg><div class="t" style="left:566px;top:211px;letter-spacing:-0.014px;">Эти фильтры определяют, какие пакеты были приняты для перенаправления или</div><div class="t" style="left:566px;top:224px;">обработки данным интерфейсом.</div><div class="t" style="left:566.5px;top:241px;">Действие фильтра:</div><svg style="left:567px;top:262px" width="12" height="12" viewBox="0 0 12 12"><circle cx="6" cy="6" r="5" fill="#f6f1f5"/><path d="M1.5 9 A5.2 5.2 0 0 1 9.5 1.8" fill="none" stroke="#7c7c80" stroke-width="1.3"/><path d="M2.5 8.3 A4 4 0 0 1 8.6 2.8" fill="none" stroke="#4c4c50" stroke-width="1"/><path d="M10.3 2.8 A5.2 5.2 0 0 1 2.3 10" fill="none" stroke="#ffffff" stroke-width="1.2"/><circle cx="6" cy="6" r="1.8" fill="#909094"/></svg><svg style="left:567px;top:285.5px" width="12" height="12" viewBox="0 0 12 12"><circle cx="6" cy="6" r="5" fill="#f6f1f5"/><path d="M1.5 9 A5.2 5.2 0 0 1 9.5 1.8" fill="none" stroke="#7c7c80" stroke-width="1.3"/><path d="M2.5 8.3 A4 4 0 0 1 8.6 2.8" fill="none" stroke="#4c4c50" stroke-width="1"/><path d="M10.3 2.8 A5.2 5.2 0 0 1 2.3 10" fill="none" stroke="#ffffff" stroke-width="1.2"/></svg><div class="t" style="left:584.5px;top:261px;color:#a4a0a4;letter-spacing:0.082px;">Пр<u>и</u>нимать все пакеты, кроме тех, что отвечают указанным ниже критериям</div><div class="t" style="left:584.5px;top:284px;color:#a4a0a4;letter-spacing:0.076px;"><u>О</u>тбрасывать все пакеты, кроме тех, что отвечают указанным ниже критериям</div><div class="t" style="left:566.5px;top:308px;letter-spacing:0.260px;"><u>Ф</u>ильтры:</div><div style="left:567px;top:325px;width:466px;height:138px;background:#fff;border-top:2px solid #7c7c80;border-left:2px solid #7c7c80;border-bottom:1px solid #e8e4e8"></div><div style="left:569px;top:327px;width:464px;height:15px;background:#f6f1f5;border-bottom:1px solid #9c989c"></div><div style="left:672px;top:327px;width:1px;height:15px;background:#8c888c"></div><div style="left:673px;top:327px;width:1px;height:15px;background:#fff"></div><div style="left:806px;top:327px;width:1px;height:15px;background:#8c888c"></div><div style="left:807px;top:327px;width:1px;height:15px;background:#fff"></div><div style="left:919px;top:327px;width:1px;height:15px;background:#8c888c"></div><div style="left:920px;top:327px;width:1px;height:15px;background:#fff"></div><div class="t" style="left:574px;top:328px;">Адрес источника</div><div class="t" style="left:680px;top:328px;letter-spacing:0.161px;">Маска сети источника</div><div class="t" style="left:813.5px;top:328px;">Адрес назначения</div><div class="t" style="left:927px;top:328px;">Маска приемника</div><div style="left:569px;top:447px;width:464px;height:16px;background:linear-gradient(180deg,#f2f2f2 0,#e6e6e6 45%,#e9e9e9 70%,#f0f0f0 100%)"></div><svg style="left:574px;top:450px" width="5" height="8" viewBox="0 0 5 8"><path d="M4.5 0.3 L4.5 7.7 L0.5 4 Z" fill="#3c3c3c"/></svg><svg style="left:1021px;top:450px" width="5" height="8" viewBox="0 0 5 8"><path d="M0.5 0.3 L0.5 7.7 L4.5 4 Z" fill="#3c3c3c"/></svg><div style="left:587px;top:447px;width:218px;height:15px;border:1px solid #8f9094;border-radius:2px;background:linear-gradient(180deg,#f5f5f6 0,#e8e8ea 45%,#d0d0d3 55%,#c8c8cc 100%)"></div><div style="left:692px;top:451px;width:1px;height:7px;background:#404044"></div><div style="left:693px;top:451px;width:1px;height:7px;background:rgba(255,255,255,.75)"></div><div style="left:695px;top:451px;width:1px;height:7px;background:#404044"></div><div style="left:696px;top:451px;width:1px;height:7px;background:rgba(255,255,255,.75)"></div><div style="left:698px;top:451px;width:1px;height:7px;background:#404044"></div><div style="left:699px;top:451px;width:1px;height:7px;background:rgba(255,255,255,.75)"></div><div style="left:782px;top:472px;width:75px;height:23px;background:#f6f1f5;border-top:1px solid #fff;border-left:1px solid #fff;border-right:1px solid #5c5c5c;border-bottom:1px solid #5c5c5c"></div><div style="left:783px;top:473px;width:73px;height:21px;border-right:1px solid #a8a4a8;border-bottom:1px solid #a8a4a8"></div><div class="t" style="left:794.0px;top:476px;color:#000;"><u>С</u>оздать...</div><div style="left:863px;top:472px;width:75px;height:23px;background:#f6f1f5;border-top:1px solid #fff;border-left:1px solid #fff;border-right:1px solid #5c5c5c;border-bottom:1px solid #5c5c5c"></div><div style="left:864px;top:473px;width:73px;height:21px;border-right:1px solid #a8a4a8;border-bottom:1px solid #a8a4a8"></div><div class="t" style="left:871.1px;top:476px;color:#a4a0a4;">И<u>з</u>менить...</div><div style="left:945px;top:472px;width:75px;height:23px;background:#f6f1f5;border-top:1px solid #fff;border-left:1px solid #fff;border-right:1px solid #5c5c5c;border-bottom:1px solid #5c5c5c"></div><div style="left:946px;top:473px;width:73px;height:21px;border-right:1px solid #a8a4a8;border-bottom:1px solid #a8a4a8"></div><div class="t" style="left:961.5px;top:476px;color:#a4a0a4;"><u>У</u>далить</div><div style="left:566px;top:510px;width:460px;height:1px;background:#9c989c"></div><div style="left:566px;top:511px;width:460px;height:1px;background:#fff"></div><div style="left:864px;top:524px;width:75px;height:23px;background:#f6f1f5;border-top:1px solid #fff;border-left:1px solid #fff;border-right:1px solid #5c5c5c;border-bottom:1px solid #5c5c5c"></div><div style="left:865px;top:525px;width:73px;height:21px;border-right:1px solid #a8a4a8;border-bottom:1px solid #a8a4a8"></div><div class="t" style="left:893.6px;top:528px;color:#000;">OK</div><div style="left:945px;top:524px;width:75px;height:23px;background:#f6f1f5;border-top:1px solid #fff;border-left:1px solid #fff;border-right:1px solid #5c5c5c;border-bottom:1px solid #5c5c5c"></div><div style="left:946px;top:525px;width:73px;height:21px;border-right:1px solid #a8a4a8;border-bottom:1px solid #a8a4a8"></div><div class="t" style="left:962.8px;top:528px;color:#000;">Отмена</div>
<div style="left:1011px;top:196px;width:383px;height:384px;background:#f6f1f5;border-radius:7px 7px 0 0;border-top:1px solid #2a323e;border-left:1px solid #2a323e;border-right:2px solid #6ecbf2;border-bottom:2px solid #6ecbf2"></div><div style="left:1012px;top:197px;width:380px;height:27px;background:linear-gradient(180deg,#86a5cf 0,#8dadd5 30%,#a5c2e4 65%,#b6d0ed 100%);border-radius:6px 5px 0 0;border-top:1px solid #e6f2fc;border-left:1px solid #c4dcf4"></div><div style="left:1011px;top:579px;width:383px;height:1px;background:#3c7ca0"></div><div class="t" style="left:1019.5px;top:204px;font-size:12px;letter-spacing:0.172px;line-height:16px;height:16px;">Добавление IP-фильтра</div><div style="left:1346px;top:204px;width:21px;height:15px;border:1px solid #42587a;border-radius:2.5px;background:linear-gradient(180deg,#cfdff0 0,#bcd2ea 45%,#a4bedc 55%,#bcd4ec 100%);box-shadow:inset 0 0 0 1px rgba(225,240,252,.6)"></div><div class="t" style="left:1346px;top:204px;width:21px;text-align:center;font-weight:bold;font-size:13px;color:#f8fafc;text-shadow:1px 0 0 #34445c,-1px 0 0 #34445c,0 1px 0 #34445c,0 -1px 0 #34445c,1px 1px 0 #34445c,-1px -1px 0 #34445c,1px -1px 0 #34445c,-1px 1px 0 #34445c;line-height:15px;height:15px;-webkit-text-stroke:0">?</div><div style="left:1369px;top:204px;width:21px;height:15px;border:1px solid #3a1410;border-radius:2.5px;background:linear-gradient(180deg,#eaa89e 0,#dc7c6c 42%,#c44a36 52%,#d86c58 75%,#efb0ac 100%);box-shadow:inset 0 0 0 1px rgba(250,200,190,.5)"></div><svg style="left:1373px;top:207px" width="13" height="9" viewBox="0 0 13 9"><path d="M2.2 1 L10.8 8 M10.8 1 L2.2 8" stroke="#5a2018" stroke-width="4.6"/><path d="M2.2 1 L10.8 8 M10.8 1 L2.2 8" stroke="#fff" stroke-width="2.7"/></svg><div style="left:1025px;top:237px;width:12px;height:12px;background:#f6f1f5;border-top:2px solid #808084;border-left:2px solid #808084;border-right:1px solid #fff;border-bottom:1px solid #fff"></div><div class="t" style="left:1043px;top:236px;letter-spacing:0.131px;"><u>И</u>сходная сеть</div><div style="left:1042px;top:236px;width:78px;height:15px;border:1px dotted #000"></div><div class="t" style="left:1043px;top:265px;letter-spacing:-0.154px;">IP-<u>а</u>дрес:</div><div style="left:1158px;top:260px;width:119px;height:22px;background:#f6f1f5;border-top:2px solid #7c7c80;border-left:2px solid #7c7c80;border-right:1px solid #e4e0e4;border-bottom:1px solid #e4e0e4"></div><div style="left:1190px;top:273px;width:1px;height:1px;background:#b4b0b4"></div><div style="left:1219px;top:273px;width:1px;height:1px;background:#b4b0b4"></div><div style="left:1249px;top:273px;width:1px;height:1px;background:#b4b0b4"></div><div class="t" style="left:1043px;top:294px;letter-spacing:0.080px;"><u>М</u>аска подсети:</div><div style="left:1158px;top:289px;width:119px;height:22px;background:#f6f1f5;border-top:2px solid #7c7c80;border-left:2px solid #7c7c80;border-right:1px solid #e4e0e4;border-bottom:1px solid #e4e0e4"></div><div style="left:1190px;top:302px;width:1px;height:1px;background:#b4b0b4"></div><div style="left:1219px;top:302px;width:1px;height:1px;background:#b4b0b4"></div><div style="left:1249px;top:302px;width:1px;height:1px;background:#b4b0b4"></div><div style="left:1025px;top:328px;width:12px;height:12px;background:#f6f1f5;border-top:2px solid #808084;border-left:2px solid #808084;border-right:1px solid #fff;border-bottom:1px solid #fff"></div><div class="t" style="left:1043px;top:327px;letter-spacing:0.026px;"><u>С</u>еть назначения</div><div class="t" style="left:1043px;top:356px;letter-spacing:-0.154px;">IP-а<u>д</u>рес:</div><div style="left:1158px;top:351px;width:119px;height:22px;background:#f6f1f5;border-top:2px solid #7c7c80;border-left:2px solid #7c7c80;border-right:1px solid #e4e0e4;border-bottom:1px solid #e4e0e4"></div><div style="left:1190px;top:364px;width:1px;height:1px;background:#b4b0b4"></div><div style="left:1219px;top:364px;width:1px;height:1px;background:#b4b0b4"></div><div style="left:1249px;top:364px;width:1px;height:1px;background:#b4b0b4"></div><div class="t" style="left:1043px;top:385px;letter-spacing:0.080px;">Маска подс<u>е</u>ти:</div><div style="left:1158px;top:380px;width:119px;height:22px;background:#f6f1f5;border-top:2px solid #7c7c80;border-left:2px solid #7c7c80;border-right:1px solid #e4e0e4;border-bottom:1px solid #e4e0e4"></div><div style="left:1190px;top:393px;width:1px;height:1px;background:#b4b0b4"></div><div style="left:1219px;top:393px;width:1px;height:1px;background:#b4b0b4"></div><div style="left:1249px;top:393px;width:1px;height:1px;background:#b4b0b4"></div><div class="t" style="left:1024.5px;top:424px;letter-spacing:0.043px;">Про<u>т</u>окол:</div><div style="left:1158px;top:421px;width:178px;height:20px;background:#fff;border-top:2px solid #7c7c80;border-left:2px solid #7c7c80;border-right:1px solid #e4e0e4;border-bottom:1px solid #e4e0e4"></div><div style="left:1320px;top:423px;width:15px;height:16px;background:#f6f1f5;border-top:1px solid #fff;border-left:1px solid #fff;border-right:1px solid #5c5c5c;border-bottom:1px solid #5c5c5c"></div><svg style="left:1324px;top:429px" width="7" height="4" viewBox="0 0 7 4"><path d="M0 0 L7 0 L3.5 4 Z" fill="#000"/></svg><div class="t" style="left:1163px;top:425px;">Любой</div><div style="left:1025px;top:531px;width:357px;height:1px;background:#9c989c"></div><div style="left:1025px;top:532px;width:357px;height:1px;background:#fff"></div><div style="left:1226px;top:544px;width:75px;height:23px;background:#000"></div><div style="left:1227px;top:545px;width:73px;height:21px;background:#f6f1f5;border-top:1px solid #fff;border-left:1px solid #fff;border-right:1px solid #5c5c5c;border-bottom:1px solid #5c5c5c"></div><div style="left:1228px;top:546px;width:71px;height:19px;border-right:1px solid #a8a4a8;border-bottom:1px solid #a8a4a8"></div><div class="t" style="left:1255.6px;top:548px;color:#000;">OK</div><div style="left:1308px;top:544px;width:74px;height:23px;background:#f6f1f5;border-top:1px solid #fff;border-left:1px solid #fff;border-right:1px solid #5c5c5c;border-bottom:1px solid #5c5c5c"></div><div style="left:1309px;top:545px;width:72px;height:21px;border-right:1px solid #a8a4a8;border-bottom:1px solid #a8a4a8"></div><div class="t" style="left:1325.3px;top:548px;color:#000;">Отмена</div>
</div></body></html>
